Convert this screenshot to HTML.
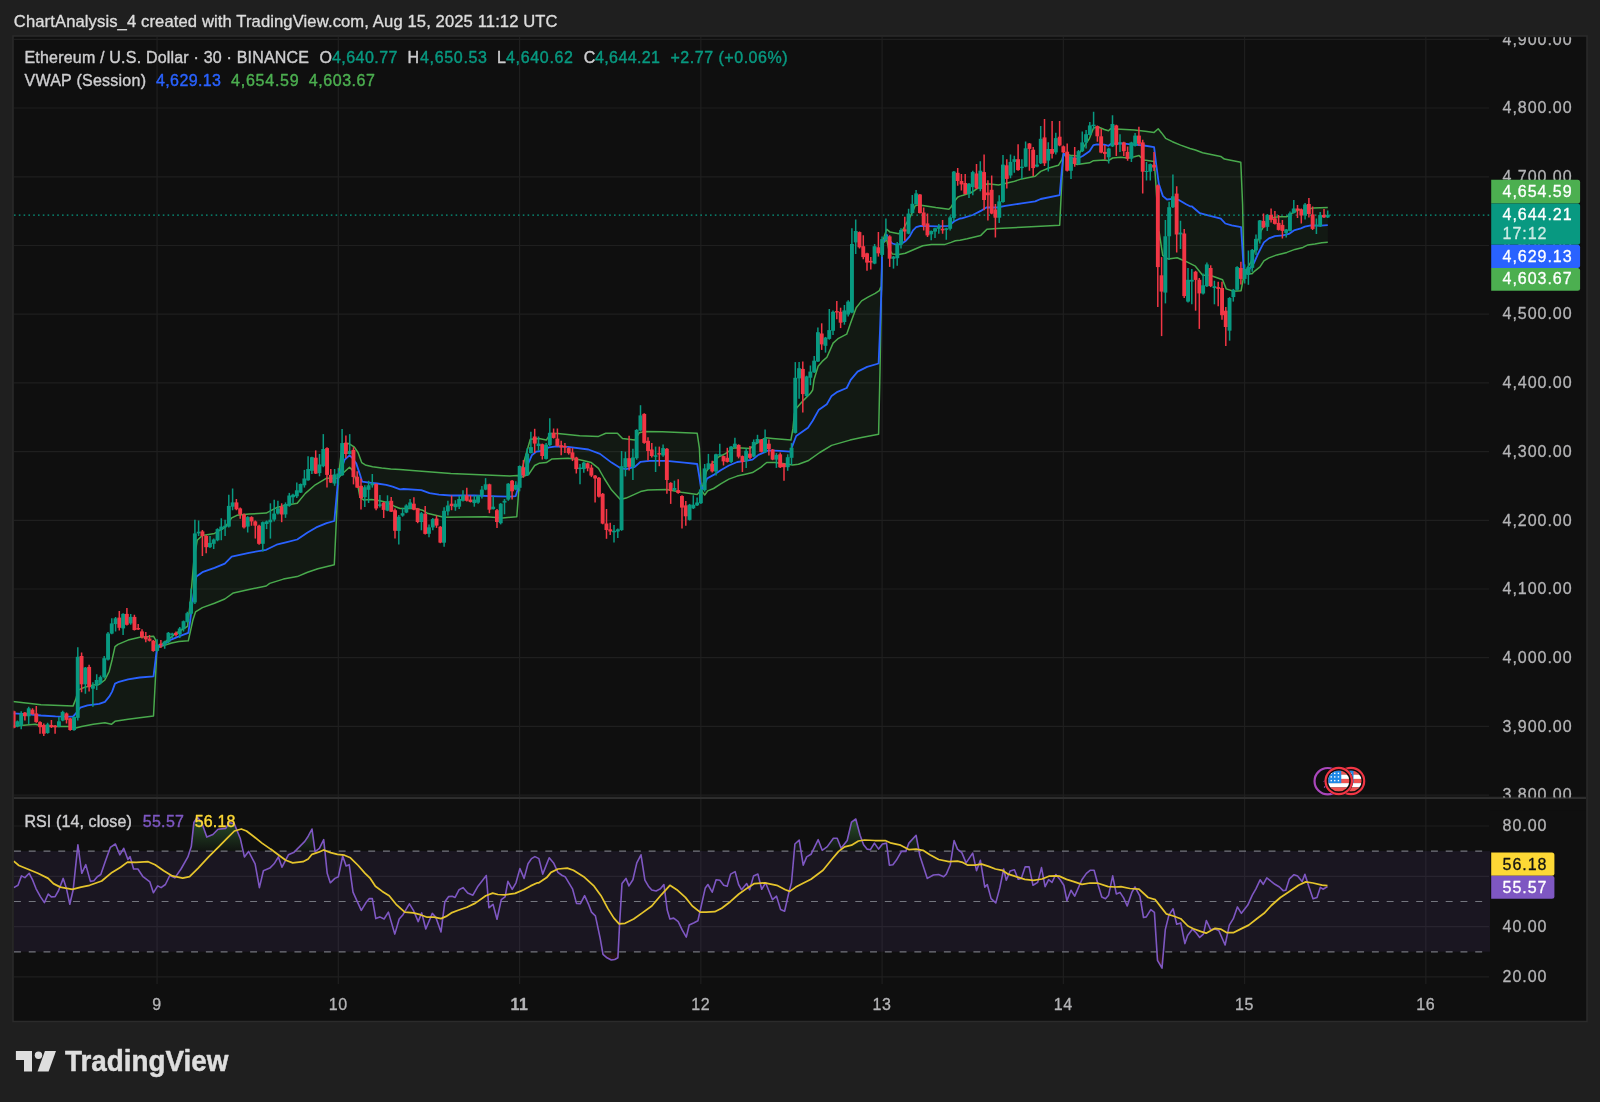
<!DOCTYPE html>
<html><head><meta charset="utf-8"><title>ChartAnalysis_4</title>
<style>
html,body{margin:0;padding:0;background:#1f1f1f;}
body{width:1600px;height:1102px;overflow:hidden;position:relative;font-family:"Liberation Sans",sans-serif;}
svg{position:absolute;left:0;top:0;will-change:transform;}
svg text{font-family:"Liberation Sans",sans-serif;stroke-linejoin:round;}
.b text,text.b{stroke:currentColor;}
</style></head><body>
<svg width="1600" height="1102" viewBox="0 0 1600 1102">
<rect x="0" y="0" width="1600" height="1102" fill="#1f1f1f"/>
<rect x="13" y="36" width="1574" height="985.5" fill="#0f0f0f" stroke="#2b2b2b" stroke-width="1.5"/>
<defs><clipPath id="mainclip"><rect x="13.7" y="37" width="1476.3" height="760"/></clipPath><clipPath id="rsiclip"><rect x="13.7" y="799" width="1476" height="186"/></clipPath></defs>
<line x1="157.05" y1="37" x2="157.05" y2="984" stroke="#1f1f1f" stroke-width="1.2"/>
<line x1="338.31" y1="37" x2="338.31" y2="984" stroke="#1f1f1f" stroke-width="1.2"/>
<line x1="519.57" y1="37" x2="519.57" y2="984" stroke="#1f1f1f" stroke-width="1.2"/>
<line x1="700.83" y1="37" x2="700.83" y2="984" stroke="#1f1f1f" stroke-width="1.2"/>
<line x1="882.09" y1="37" x2="882.09" y2="984" stroke="#1f1f1f" stroke-width="1.2"/>
<line x1="1063.35" y1="37" x2="1063.35" y2="984" stroke="#1f1f1f" stroke-width="1.2"/>
<line x1="1244.61" y1="37" x2="1244.61" y2="984" stroke="#1f1f1f" stroke-width="1.2"/>
<line x1="1425.87" y1="37" x2="1425.87" y2="984" stroke="#1f1f1f" stroke-width="1.2"/>
<line x1="14" y1="39.3" x2="1489" y2="39.3" stroke="#1f1f1f" stroke-width="1.2"/>
<line x1="14" y1="108.0" x2="1489" y2="108.0" stroke="#1f1f1f" stroke-width="1.2"/>
<line x1="14" y1="176.8" x2="1489" y2="176.8" stroke="#1f1f1f" stroke-width="1.2"/>
<line x1="14" y1="245.5" x2="1489" y2="245.5" stroke="#1f1f1f" stroke-width="1.2"/>
<line x1="14" y1="314.2" x2="1489" y2="314.2" stroke="#1f1f1f" stroke-width="1.2"/>
<line x1="14" y1="382.9" x2="1489" y2="382.9" stroke="#1f1f1f" stroke-width="1.2"/>
<line x1="14" y1="451.6" x2="1489" y2="451.6" stroke="#1f1f1f" stroke-width="1.2"/>
<line x1="14" y1="520.3" x2="1489" y2="520.3" stroke="#1f1f1f" stroke-width="1.2"/>
<line x1="14" y1="589.0" x2="1489" y2="589.0" stroke="#1f1f1f" stroke-width="1.2"/>
<line x1="14" y1="657.7" x2="1489" y2="657.7" stroke="#1f1f1f" stroke-width="1.2"/>
<line x1="14" y1="726.4" x2="1489" y2="726.4" stroke="#1f1f1f" stroke-width="1.2"/>
<line x1="14" y1="795.1" x2="1489" y2="795.1" stroke="#1f1f1f" stroke-width="1.2"/>
<line x1="14" y1="826.0" x2="1489" y2="826.0" stroke="#1f1f1f" stroke-width="1.2"/>
<line x1="14" y1="876.3" x2="1489" y2="876.3" stroke="#1f1f1f" stroke-width="1.2"/>
<line x1="14" y1="926.6" x2="1489" y2="926.6" stroke="#1f1f1f" stroke-width="1.2"/>
<line x1="14" y1="976.9" x2="1489" y2="976.9" stroke="#1f1f1f" stroke-width="1.2"/>
<line x1="14" y1="797.5" x2="1586" y2="797.5" stroke="#2b2b2b" stroke-width="1.6"/>
<polygon points="12.0,701.5 41.0,704.7 73.0,706.1 75.9,698.9 78.0,690.1 84.6,687.2 93.3,685.1 99.1,684.3 104.9,680.0 109.2,671.3 112.1,659.7 115.0,646.6 118.0,644.4 128.1,640.1 139.7,637.2 153.5,636.2 155.7,640.1 157.0,647.8 161.9,644.4 177.2,632.5 187.5,626.4 190.3,602.4 193.8,561.0 197.2,540.3 202.4,535.5 214.5,533.4 224.8,527.4 231.7,517.9 236.9,515.3 249.0,514.0 266.2,513.1 276.6,507.6 286.9,505.0 297.2,503.3 305.3,493.4 315.3,484.8 326.2,478.3 338.3,477.9 338.3,478.1 340.8,456.3 342.5,443.8 349.0,443.6 354.4,447.2 358.1,452.7 361.7,462.6 365.3,464.9 372.6,466.7 381.7,468.1 390.7,469.0 400.0,469.5 415.4,470.7 450.8,473.6 486.2,475.1 509.8,476.0 517.4,475.4 519.6,477.2 519.6,477.8 524.5,459.7 530.3,439.3 539.0,438.6 546.3,440.1 550.6,433.5 557.9,433.5 579.7,435.7 598.5,436.4 605.8,433.3 617.4,433.3 622.5,438.6 634.8,440.1 639.2,432.8 645.0,431.4 662.4,431.8 697.2,433.3 699.4,448.1 701.3,490.1 703.0,484.4 706.5,471.4 710.1,465.5 718.3,457.2 725.4,453.7 733.6,448.0 737.2,447.8 750.2,448.4 756.1,443.7 765.5,437.8 772.6,438.4 790.9,440.1 792.9,428.9 794.4,413.6 796.8,407.7 803.2,400.6 810.3,393.5 812.7,390.0 814.0,379.8 818.1,366.2 822.2,361.4 826.9,357.3 833.1,343.1 838.5,338.3 846.7,334.2 850.7,322.7 856.2,307.7 861.6,300.9 868.4,296.8 875.2,293.4 879.3,290.7 880.7,287.3 881.4,290.0 882.1,244.0 884.6,235.3 886.8,229.3 890.1,232.1 898.8,233.7 902.1,231.0 910.8,215.7 915.1,205.9 918.4,204.8 922.8,205.4 935.8,207.6 948.9,209.2 951.1,207.0 954.3,201.6 957.6,197.2 960.0,196.1 963.1,195.2 971.3,192.5 979.5,187.1 987.6,183.7 998.5,185.0 1003.9,183.7 1013.5,181.6 1021.6,178.9 1035.2,176.2 1040.7,171.4 1048.8,168.0 1058.4,165.3 1061.8,159.9 1063.5,153.7 1065.0,153.9 1070.4,155.3 1077.2,156.0 1082.7,148.5 1089.5,138.3 1093.5,128.1 1097.6,126.7 1104.4,129.5 1108.5,130.8 1110.5,128.8 1120.7,129.2 1134.4,130.1 1145.2,131.2 1154.1,132.4 1158.2,128.8 1161.6,132.9 1165.6,138.3 1172.4,141.7 1180.6,145.1 1190.0,148.5 1195.4,150.0 1202.6,152.7 1220.8,156.4 1224.4,159.1 1240.8,162.3 1242.6,204.5 1244.0,275.3 1244.8,273.8 1248.0,266.9 1251.0,261.9 1255.0,248.9 1261.0,230.9 1262.9,227.9 1269.9,217.9 1278.9,216.7 1286.9,216.7 1290.9,213.9 1294.9,211.5 1298.9,209.5 1302.9,210.5 1312.9,208.0 1327.8,207.5 1327.8,242.3 1321.8,242.7 1314.9,243.9 1307.9,244.9 1302.9,247.4 1294.9,249.4 1286.9,252.4 1276.9,254.9 1268.9,257.9 1263.9,260.9 1260.0,266.9 1255.0,270.8 1252.0,273.8 1244.8,273.8 1244.0,275.3 1242.9,280.7 1241.1,290.7 1233.5,291.3 1226.2,288.9 1222.6,279.8 1209.9,275.3 1202.6,275.3 1195.4,266.2 1186.3,261.7 1177.2,257.7 1168.1,259.0 1162.7,255.3 1159.1,231.7 1158.8,239.9 1156.8,198.8 1155.4,177.1 1154.1,161.4 1143.9,160.1 1139.1,155.6 1134.4,156.7 1127.6,158.0 1120.7,157.3 1112.6,158.0 1108.5,160.7 1104.4,160.1 1093.5,160.7 1089.5,162.8 1077.2,164.6 1070.4,162.1 1063.5,153.7 1061.8,181.6 1059.7,225.2 1021.6,227.2 997.1,228.6 986.9,229.3 980.8,235.4 967.2,238.8 960.0,240.2 955.4,240.8 951.1,242.4 944.5,244.6 931.5,244.6 922.8,245.7 914.0,249.5 905.3,253.3 898.8,254.4 892.3,253.9 888.5,248.4 886.8,239.7 882.2,244.0 881.4,290.0 880.0,371.6 878.6,434.2 861.6,437.6 850.0,440.1 831.6,445.4 819.8,452.5 808.0,460.8 798.5,464.3 792.6,464.9 784.4,463.7 774.9,462.5 766.7,462.5 760.8,467.3 752.5,472.6 745.4,474.3 737.2,476.1 728.9,479.1 720.7,483.8 713.6,488.5 707.7,490.9 704.7,495.0 701.3,490.1 697.2,494.5 681.3,492.3 666.7,489.4 647.9,490.1 640.6,491.6 626.1,498.1 620.3,499.6 611.6,490.1 604.3,478.5 598.5,468.4 591.3,462.6 579.7,459.7 568.1,458.2 552.1,458.9 546.3,462.6 539.0,463.3 534.7,465.5 528.9,474.2 519.6,477.8 519.6,477.2 518.0,500.8 516.8,516.7 502.7,517.9 486.2,516.7 462.6,517.1 443.7,517.3 436.6,515.5 427.2,513.2 422.5,510.2 415.4,508.4 401.2,508.4 400.0,508.5 394.4,506.2 387.1,502.6 379.9,500.8 371.7,499.4 363.5,499.9 359.9,497.1 358.1,487.2 355.4,478.1 352.2,469.9 349.5,467.2 342.6,473.5 338.3,478.1 338.3,477.9 334.3,564.8 317.9,568.8 307.6,572.2 297.2,576.6 283.4,579.1 269.7,583.4 266.2,586.0 249.0,589.5 233.4,592.9 224.8,599.0 214.5,603.3 202.4,607.6 195.5,611.9 192.9,620.0 188.3,640.8 178.9,641.5 171.7,643.0 164.4,645.2 157.0,647.8 153.5,716.0 139.7,717.7 128.1,719.2 115.0,721.3 111.4,724.3 104.9,722.8 93.3,724.3 81.7,726.4 75.9,727.9 68.6,726.4 55.5,726.4 41.0,725.7 35.2,724.3 26.5,725.0 12.0,726.4" fill="#4caf50" fill-opacity="0.07" clip-path="url(#mainclip)"/>
<polyline points="12.0,701.5 41.0,704.7 73.0,706.1 75.9,698.9 78.0,690.1 84.6,687.2 93.3,685.1 99.1,684.3 104.9,680.0 109.2,671.3 112.1,659.7 115.0,646.6 118.0,644.4 128.1,640.1 139.7,637.2 153.5,636.2 155.7,640.1 157.0,647.8 161.9,644.4 177.2,632.5 187.5,626.4 190.3,602.4 193.8,561.0 197.2,540.3 202.4,535.5 214.5,533.4 224.8,527.4 231.7,517.9 236.9,515.3 249.0,514.0 266.2,513.1 276.6,507.6 286.9,505.0 297.2,503.3 305.3,493.4 315.3,484.8 326.2,478.3 338.3,477.9 338.3,478.1 340.8,456.3 342.5,443.8 349.0,443.6 354.4,447.2 358.1,452.7 361.7,462.6 365.3,464.9 372.6,466.7 381.7,468.1 390.7,469.0 400.0,469.5 415.4,470.7 450.8,473.6 486.2,475.1 509.8,476.0 517.4,475.4 519.6,477.2 519.6,477.8 524.5,459.7 530.3,439.3 539.0,438.6 546.3,440.1 550.6,433.5 557.9,433.5 579.7,435.7 598.5,436.4 605.8,433.3 617.4,433.3 622.5,438.6 634.8,440.1 639.2,432.8 645.0,431.4 662.4,431.8 697.2,433.3 699.4,448.1 701.3,490.1 703.0,484.4 706.5,471.4 710.1,465.5 718.3,457.2 725.4,453.7 733.6,448.0 737.2,447.8 750.2,448.4 756.1,443.7 765.5,437.8 772.6,438.4 790.9,440.1 792.9,428.9 794.4,413.6 796.8,407.7 803.2,400.6 810.3,393.5 812.7,390.0 814.0,379.8 818.1,366.2 822.2,361.4 826.9,357.3 833.1,343.1 838.5,338.3 846.7,334.2 850.7,322.7 856.2,307.7 861.6,300.9 868.4,296.8 875.2,293.4 879.3,290.7 880.7,287.3 881.4,290.0 882.1,244.0 884.6,235.3 886.8,229.3 890.1,232.1 898.8,233.7 902.1,231.0 910.8,215.7 915.1,205.9 918.4,204.8 922.8,205.4 935.8,207.6 948.9,209.2 951.1,207.0 954.3,201.6 957.6,197.2 960.0,196.1 963.1,195.2 971.3,192.5 979.5,187.1 987.6,183.7 998.5,185.0 1003.9,183.7 1013.5,181.6 1021.6,178.9 1035.2,176.2 1040.7,171.4 1048.8,168.0 1058.4,165.3 1061.8,159.9 1063.5,153.7 1065.0,153.9 1070.4,155.3 1077.2,156.0 1082.7,148.5 1089.5,138.3 1093.5,128.1 1097.6,126.7 1104.4,129.5 1108.5,130.8 1110.5,128.8 1120.7,129.2 1134.4,130.1 1145.2,131.2 1154.1,132.4 1158.2,128.8 1161.6,132.9 1165.6,138.3 1172.4,141.7 1180.6,145.1 1190.0,148.5 1195.4,150.0 1202.6,152.7 1220.8,156.4 1224.4,159.1 1240.8,162.3 1242.6,204.5 1244.0,275.3 1244.8,273.8 1248.0,266.9 1251.0,261.9 1255.0,248.9 1261.0,230.9 1262.9,227.9 1269.9,217.9 1278.9,216.7 1286.9,216.7 1290.9,213.9 1294.9,211.5 1298.9,209.5 1302.9,210.5 1312.9,208.0 1327.8,207.5" fill="none" stroke="#49aa4d" stroke-width="1.5" stroke-linejoin="round" clip-path="url(#mainclip)"/>
<polyline points="12.0,726.4 26.5,725.0 35.2,724.3 41.0,725.7 55.5,726.4 68.6,726.4 75.9,727.9 81.7,726.4 93.3,724.3 104.9,722.8 111.4,724.3 115.0,721.3 128.1,719.2 139.7,717.7 153.5,716.0 157.0,647.8 164.4,645.2 171.7,643.0 178.9,641.5 188.3,640.8 192.9,620.0 195.5,611.9 202.4,607.6 214.5,603.3 224.8,599.0 233.4,592.9 249.0,589.5 266.2,586.0 269.7,583.4 283.4,579.1 297.2,576.6 307.6,572.2 317.9,568.8 334.3,564.8 338.3,477.9 338.3,478.1 342.6,473.5 349.5,467.2 352.2,469.9 355.4,478.1 358.1,487.2 359.9,497.1 363.5,499.9 371.7,499.4 379.9,500.8 387.1,502.6 394.4,506.2 400.0,508.5 401.2,508.4 415.4,508.4 422.5,510.2 427.2,513.2 436.6,515.5 443.7,517.3 462.6,517.1 486.2,516.7 502.7,517.9 516.8,516.7 518.0,500.8 519.6,477.2 519.6,477.8 528.9,474.2 534.7,465.5 539.0,463.3 546.3,462.6 552.1,458.9 568.1,458.2 579.7,459.7 591.3,462.6 598.5,468.4 604.3,478.5 611.6,490.1 620.3,499.6 626.1,498.1 640.6,491.6 647.9,490.1 666.7,489.4 681.3,492.3 697.2,494.5 701.3,490.1 704.7,495.0 707.7,490.9 713.6,488.5 720.7,483.8 728.9,479.1 737.2,476.1 745.4,474.3 752.5,472.6 760.8,467.3 766.7,462.5 774.9,462.5 784.4,463.7 792.6,464.9 798.5,464.3 808.0,460.8 819.8,452.5 831.6,445.4 850.0,440.1 861.6,437.6 878.6,434.2 880.0,371.6 881.4,290.0 882.2,244.0 886.8,239.7 888.5,248.4 892.3,253.9 898.8,254.4 905.3,253.3 914.0,249.5 922.8,245.7 931.5,244.6 944.5,244.6 951.1,242.4 955.4,240.8 960.0,240.2 967.2,238.8 980.8,235.4 986.9,229.3 997.1,228.6 1021.6,227.2 1059.7,225.2 1061.8,181.6 1063.5,153.7 1070.4,162.1 1077.2,164.6 1089.5,162.8 1093.5,160.7 1104.4,160.1 1108.5,160.7 1112.6,158.0 1120.7,157.3 1127.6,158.0 1134.4,156.7 1139.1,155.6 1143.9,160.1 1154.1,161.4 1155.4,177.1 1156.8,198.8 1158.8,239.9 1159.1,231.7 1162.7,255.3 1168.1,259.0 1177.2,257.7 1186.3,261.7 1195.4,266.2 1202.6,275.3 1209.9,275.3 1222.6,279.8 1226.2,288.9 1233.5,291.3 1241.1,290.7 1242.9,280.7 1244.0,275.3 1244.8,273.8 1252.0,273.8 1255.0,270.8 1260.0,266.9 1263.9,260.9 1268.9,257.9 1276.9,254.9 1286.9,252.4 1294.9,249.4 1302.9,247.4 1307.9,244.9 1314.9,243.9 1321.8,242.7 1327.8,242.3" fill="none" stroke="#49aa4d" stroke-width="1.5" stroke-linejoin="round" clip-path="url(#mainclip)"/>
<polyline points="12.0,713.4 26.5,714.1 41.0,715.5 55.5,716.3 73.0,716.7 75.9,713.4 80.2,707.6 87.5,705.4 99.1,703.9 104.9,701.8 109.2,696.7 112.1,691.6 115.0,683.6 118.0,682.2 128.1,679.3 139.7,677.5 153.5,676.4 157.0,647.8 164.4,643.7 171.7,639.3 178.9,636.4 188.3,632.8 190.3,620.0 192.9,599.0 196.4,576.6 202.4,572.2 214.5,567.9 224.8,563.6 231.7,556.7 249.0,552.8 266.2,549.8 276.6,544.7 286.9,542.1 297.2,539.5 307.6,532.6 316.2,527.4 326.6,523.1 334.3,521.0 338.3,477.9 338.3,478.1 344.5,459.9 349.5,455.4 352.2,457.7 356.3,463.6 359.9,474.4 362.2,481.7 369.0,482.6 377.1,483.5 386.2,484.9 392.6,486.7 400.0,489.4 403.6,489.0 421.3,490.2 429.5,493.1 439.0,494.6 450.8,495.5 474.4,495.5 498.0,496.3 509.8,496.7 515.7,496.1 517.4,490.2 519.6,477.2 519.6,477.8 527.4,465.5 531.8,455.3 536.1,451.7 541.9,451.0 549.2,447.3 556.4,446.3 568.1,446.9 588.4,449.5 600.0,453.9 611.6,462.6 620.3,468.1 626.1,469.1 634.8,466.9 640.6,461.8 649.3,460.8 666.7,460.8 684.2,462.6 697.2,464.0 699.4,477.1 701.3,490.1 704.7,484.4 707.1,478.5 713.6,474.9 720.7,470.2 728.9,465.5 737.2,462.0 745.4,460.8 752.5,459.6 758.4,454.9 765.5,451.9 767.9,450.4 779.7,450.8 790.3,451.6 792.6,445.4 796.2,436.0 808.0,427.7 812.7,420.7 818.6,410.1 826.8,404.2 831.6,395.9 837.5,391.8 846.7,388.0 846.7,388.0 850.7,379.8 857.6,371.6 867.1,366.9 878.6,363.5 880.0,330.8 881.4,290.0 882.2,244.0 886.8,234.8 889.0,239.7 892.3,243.5 896.6,244.6 901.0,244.0 905.3,241.3 909.7,236.4 913.0,230.4 916.2,227.2 920.6,225.8 929.3,226.1 938.0,226.4 948.9,225.8 954.3,221.2 960.0,218.5 961.8,218.4 972.7,215.0 980.8,210.9 986.3,207.5 997.1,207.5 1005.3,205.9 1021.6,203.4 1035.2,201.4 1040.7,199.0 1059.7,195.2 1061.8,170.7 1063.5,153.7 1070.4,158.0 1077.2,158.7 1082.7,156.0 1089.5,151.2 1093.5,145.1 1096.9,144.4 1104.4,144.7 1108.5,145.8 1111.2,143.7 1120.7,143.3 1131.6,144.4 1143.9,145.5 1154.1,147.1 1156.1,163.5 1158.8,183.9 1162.9,196.1 1167.0,199.5 1172.4,198.8 1179.3,200.2 1186.1,204.3 1190.0,206.3 1191.7,206.3 1199.9,213.2 1208.1,215.4 1220.8,218.6 1225.3,223.5 1231.7,225.4 1241.1,227.2 1242.6,251.7 1244.0,275.3 1244.8,273.8 1249.0,269.8 1254.0,262.9 1258.0,253.9 1261.0,247.9 1263.9,242.4 1268.9,238.4 1274.9,236.1 1282.9,235.4 1288.9,233.9 1293.9,230.4 1300.9,228.4 1304.9,226.7 1310.9,225.4 1320.8,225.7 1327.8,225.1" fill="none" stroke="#2962ff" stroke-width="1.8" stroke-linejoin="round" clip-path="url(#mainclip)"/>
<line x1="14" y1="215.1" x2="1490" y2="215.1" stroke="#089981" stroke-width="1.2" stroke-dasharray="1.6 3.2"/>
<g stroke-width="1.5" clip-path="url(#mainclip)"><path d="M13.6 710.5V728.6" stroke="#f23645"/><path d="M17.4 720.6V727.2" stroke="#089981"/><path d="M21.2 711.2V729.3" stroke="#089981"/><path d="M24.9 711.9V720.6" stroke="#f23645"/><path d="M28.7 706.8V724.3" stroke="#089981"/><path d="M32.5 708.3V714.8" stroke="#f23645"/><path d="M36.3 706.1V722.8" stroke="#f23645"/><path d="M40.0 721.3V733.7" stroke="#f23645"/><path d="M43.8 723.5V735.9" stroke="#f23645"/><path d="M47.6 722.8V733.7" stroke="#089981"/><path d="M51.4 719.9V727.9" stroke="#f23645"/><path d="M55.1 725.0V733.7" stroke="#f23645"/><path d="M58.9 717.0V727.2" stroke="#089981"/><path d="M62.7 710.8V721.3" stroke="#089981"/><path d="M66.5 712.6V723.5" stroke="#f23645"/><path d="M70.2 717.7V730.8" stroke="#f23645"/><path d="M74.0 716.3V730.8" stroke="#089981"/><path d="M77.8 647.3V720.6" stroke="#089981"/><path d="M81.6 652.4V692.3" stroke="#f23645"/><path d="M85.4 666.9V693.8" stroke="#089981"/><path d="M89.1 664.7V691.6" stroke="#f23645"/><path d="M92.9 682.2V706.8" stroke="#089981"/><path d="M96.7 674.2V690.1" stroke="#089981"/><path d="M100.5 675.6V684.3" stroke="#089981"/><path d="M104.2 656.0V678.5" stroke="#089981"/><path d="M108.0 632.1V660.4" stroke="#089981"/><path d="M111.8 618.3V634.3" stroke="#089981"/><path d="M115.6 616.9V631.4" stroke="#089981"/><path d="M119.3 611.0V630.6" stroke="#f23645"/><path d="M123.1 613.2V635.0" stroke="#089981"/><path d="M126.9 608.1V625.6" stroke="#f23645"/><path d="M130.7 613.9V624.8" stroke="#089981"/><path d="M134.4 614.7V630.6" stroke="#f23645"/><path d="M138.2 624.1V629.9" stroke="#f23645"/><path d="M142.0 629.2V638.6" stroke="#f23645"/><path d="M145.8 632.1V642.2" stroke="#f23645"/><path d="M149.5 635.0V641.5" stroke="#f23645"/><path d="M153.3 640.1V651.7" stroke="#f23645"/><path d="M157.1 639.3V651.7" stroke="#089981"/><path d="M160.9 640.1V648.1" stroke="#f23645"/><path d="M164.7 640.8V648.8" stroke="#089981"/><path d="M168.4 632.1V643.0" stroke="#089981"/><path d="M172.2 632.8V637.9" stroke="#089981"/><path d="M176.0 631.4V636.4" stroke="#f23645"/><path d="M179.8 627.0V637.9" stroke="#089981"/><path d="M183.5 620.5V631.4" stroke="#089981"/><path d="M187.3 611.8V622.7" stroke="#089981"/><path d="M191.1 588.6V614.5" stroke="#089981"/><path d="M194.9 519.7V604.1" stroke="#089981"/><path d="M198.6 520.5V536.0" stroke="#089981"/><path d="M202.4 530.0V555.9" stroke="#f23645"/><path d="M206.2 535.2V553.3" stroke="#f23645"/><path d="M210.0 536.0V548.1" stroke="#089981"/><path d="M213.7 538.6V549.0" stroke="#089981"/><path d="M217.5 528.3V541.2" stroke="#089981"/><path d="M221.3 518.3V540.3" stroke="#089981"/><path d="M225.1 519.7V536.0" stroke="#089981"/><path d="M228.8 494.7V527.4" stroke="#089981"/><path d="M232.6 488.6V510.2" stroke="#089981"/><path d="M236.4 499.0V510.2" stroke="#f23645"/><path d="M240.2 507.6V518.8" stroke="#f23645"/><path d="M244.0 513.6V528.6" stroke="#f23645"/><path d="M247.7 516.2V532.6" stroke="#089981"/><path d="M251.5 516.2V525.7" stroke="#f23645"/><path d="M255.3 520.5V538.6" stroke="#f23645"/><path d="M259.1 524.8V544.7" stroke="#f23645"/><path d="M262.8 521.4V551.6" stroke="#089981"/><path d="M266.6 520.5V529.1" stroke="#089981"/><path d="M270.4 503.3V538.6" stroke="#089981"/><path d="M274.2 499.8V521.4" stroke="#089981"/><path d="M277.9 500.7V514.5" stroke="#089981"/><path d="M281.7 503.3V522.2" stroke="#f23645"/><path d="M285.5 502.4V517.9" stroke="#089981"/><path d="M289.3 492.9V506.7" stroke="#089981"/><path d="M293.0 493.8V503.3" stroke="#089981"/><path d="M296.8 482.6V498.1" stroke="#089981"/><path d="M300.6 483.5V493.0" stroke="#089981"/><path d="M304.4 469.9V487.6" stroke="#089981"/><path d="M308.1 456.3V480.8" stroke="#089981"/><path d="M311.9 456.8V474.0" stroke="#089981"/><path d="M315.7 450.4V474.0" stroke="#f23645"/><path d="M319.5 454.0V476.3" stroke="#089981"/><path d="M323.3 434.1V467.2" stroke="#089981"/><path d="M327.0 447.2V487.6" stroke="#f23645"/><path d="M330.8 469.0V483.1" stroke="#f23645"/><path d="M334.6 469.0V485.8" stroke="#089981"/><path d="M338.4 468.1V484.9" stroke="#089981"/><path d="M342.1 429.1V475.8" stroke="#089981"/><path d="M345.9 435.4V458.1" stroke="#f23645"/><path d="M349.7 434.1V454.5" stroke="#089981"/><path d="M353.5 447.2V484.4" stroke="#f23645"/><path d="M357.2 471.3V488.1" stroke="#f23645"/><path d="M361.0 478.5V509.4" stroke="#f23645"/><path d="M364.8 485.3V507.1" stroke="#089981"/><path d="M368.6 480.8V503.0" stroke="#089981"/><path d="M372.3 474.0V487.6" stroke="#089981"/><path d="M376.1 483.5V510.3" stroke="#f23645"/><path d="M379.9 494.9V507.6" stroke="#089981"/><path d="M383.7 502.1V518.0" stroke="#f23645"/><path d="M387.5 495.3V511.2" stroke="#089981"/><path d="M391.2 497.1V512.1" stroke="#f23645"/><path d="M395.0 508.4V538.5" stroke="#f23645"/><path d="M398.8 514.9V544.4" stroke="#089981"/><path d="M402.6 507.9V516.7" stroke="#089981"/><path d="M406.3 504.3V513.2" stroke="#089981"/><path d="M410.1 499.0V509.0" stroke="#089981"/><path d="M413.9 497.2V510.2" stroke="#f23645"/><path d="M417.7 507.9V523.2" stroke="#f23645"/><path d="M421.4 512.0V530.3" stroke="#089981"/><path d="M425.2 506.1V534.4" stroke="#f23645"/><path d="M429.0 524.4V537.3" stroke="#089981"/><path d="M432.8 517.9V530.3" stroke="#089981"/><path d="M436.5 515.5V527.9" stroke="#f23645"/><path d="M440.3 526.1V543.2" stroke="#f23645"/><path d="M444.1 507.3V546.8" stroke="#089981"/><path d="M447.9 500.8V515.5" stroke="#089981"/><path d="M451.6 495.5V510.2" stroke="#f23645"/><path d="M455.4 500.2V510.8" stroke="#089981"/><path d="M459.2 496.1V509.0" stroke="#089981"/><path d="M463.0 490.2V501.4" stroke="#089981"/><path d="M466.8 487.8V501.4" stroke="#f23645"/><path d="M470.5 495.5V502.5" stroke="#f23645"/><path d="M474.3 495.5V506.7" stroke="#089981"/><path d="M478.1 494.9V503.7" stroke="#089981"/><path d="M481.9 486.0V498.4" stroke="#089981"/><path d="M485.6 478.1V490.2" stroke="#089981"/><path d="M489.4 483.7V513.2" stroke="#f23645"/><path d="M493.2 496.1V509.6" stroke="#089981"/><path d="M497.0 509.0V527.9" stroke="#f23645"/><path d="M500.7 503.1V524.4" stroke="#089981"/><path d="M504.5 499.0V514.3" stroke="#089981"/><path d="M508.3 483.1V500.8" stroke="#089981"/><path d="M512.1 480.1V499.6" stroke="#f23645"/><path d="M515.8 481.3V490.2" stroke="#089981"/><path d="M519.6 465.4V491.3" stroke="#089981"/><path d="M523.4 460.1V477.8" stroke="#f23645"/><path d="M527.2 448.3V476.0" stroke="#089981"/><path d="M530.9 431.8V453.6" stroke="#089981"/><path d="M534.7 428.8V453.0" stroke="#f23645"/><path d="M538.5 436.5V450.6" stroke="#089981"/><path d="M542.3 443.6V459.5" stroke="#f23645"/><path d="M546.1 443.0V459.5" stroke="#089981"/><path d="M549.8 418.3V445.9" stroke="#089981"/><path d="M553.6 428.5V438.6" stroke="#f23645"/><path d="M557.4 428.5V446.6" stroke="#f23645"/><path d="M561.2 440.8V455.3" stroke="#f23645"/><path d="M564.9 443.0V453.1" stroke="#f23645"/><path d="M568.7 447.3V454.6" stroke="#f23645"/><path d="M572.5 448.1V461.1" stroke="#f23645"/><path d="M576.3 456.8V473.5" stroke="#f23645"/><path d="M580.0 464.0V484.3" stroke="#089981"/><path d="M583.8 461.8V472.7" stroke="#089981"/><path d="M587.6 462.6V471.3" stroke="#f23645"/><path d="M591.4 464.7V477.1" stroke="#f23645"/><path d="M595.1 474.9V502.5" stroke="#f23645"/><path d="M598.9 477.1V497.4" stroke="#f23645"/><path d="M602.7 493.0V524.3" stroke="#f23645"/><path d="M606.5 509.0V538.8" stroke="#f23645"/><path d="M610.2 522.8V535.1" stroke="#f23645"/><path d="M614.0 525.0V542.4" stroke="#089981"/><path d="M617.8 528.6V538.0" stroke="#089981"/><path d="M621.6 451.0V530.8" stroke="#089981"/><path d="M625.4 451.7V476.4" stroke="#089981"/><path d="M629.1 435.7V470.6" stroke="#f23645"/><path d="M632.9 448.8V480.0" stroke="#089981"/><path d="M636.7 429.2V459.7" stroke="#089981"/><path d="M640.5 405.2V431.4" stroke="#089981"/><path d="M644.2 413.2V443.7" stroke="#f23645"/><path d="M648.0 437.2V460.4" stroke="#f23645"/><path d="M651.8 443.0V457.5" stroke="#f23645"/><path d="M655.6 446.6V472.0" stroke="#089981"/><path d="M659.3 446.6V466.2" stroke="#f23645"/><path d="M663.1 444.4V456.8" stroke="#089981"/><path d="M666.9 448.1V493.8" stroke="#f23645"/><path d="M670.7 482.2V503.9" stroke="#f23645"/><path d="M674.4 480.7V490.9" stroke="#089981"/><path d="M678.2 479.3V493.8" stroke="#f23645"/><path d="M682.0 495.2V528.6" stroke="#f23645"/><path d="M685.8 501.0V525.7" stroke="#f23645"/><path d="M689.6 503.9V520.6" stroke="#089981"/><path d="M693.3 495.2V509.0" stroke="#089981"/><path d="M697.1 497.4V506.1" stroke="#089981"/><path d="M700.9 484.3V503.9" stroke="#089981"/><path d="M704.7 464.0V491.6" stroke="#089981"/><path d="M708.4 453.9V469.8" stroke="#089981"/><path d="M712.2 460.8V472.6" stroke="#f23645"/><path d="M716.0 453.7V475.5" stroke="#089981"/><path d="M719.8 443.7V456.1" stroke="#089981"/><path d="M723.5 455.5V465.5" stroke="#f23645"/><path d="M727.3 447.8V462.5" stroke="#f23645"/><path d="M731.1 446.0V463.1" stroke="#089981"/><path d="M734.9 437.8V447.8" stroke="#089981"/><path d="M738.6 444.3V458.4" stroke="#f23645"/><path d="M742.4 455.5V472.0" stroke="#f23645"/><path d="M746.2 448.4V467.9" stroke="#089981"/><path d="M750.0 446.0V459.0" stroke="#f23645"/><path d="M753.7 439.5V457.2" stroke="#089981"/><path d="M757.5 434.8V443.7" stroke="#089981"/><path d="M761.3 439.0V452.5" stroke="#f23645"/><path d="M765.1 429.5V453.1" stroke="#089981"/><path d="M768.9 439.5V455.5" stroke="#f23645"/><path d="M772.6 449.0V460.2" stroke="#f23645"/><path d="M776.4 453.1V467.9" stroke="#089981"/><path d="M780.2 452.5V467.9" stroke="#f23645"/><path d="M784.0 463.1V480.8" stroke="#f23645"/><path d="M787.7 454.3V470.8" stroke="#089981"/><path d="M791.5 443.1V464.9" stroke="#089981"/><path d="M795.3 362.1V433.5" stroke="#089981"/><path d="M799.1 362.1V398.8" stroke="#089981"/><path d="M802.8 361.4V412.4" stroke="#f23645"/><path d="M806.6 375.7V396.8" stroke="#089981"/><path d="M810.4 365.5V385.2" stroke="#089981"/><path d="M814.2 356.0V373.0" stroke="#089981"/><path d="M817.9 327.4V362.1" stroke="#089981"/><path d="M821.7 323.3V349.9" stroke="#f23645"/><path d="M825.5 336.9V352.6" stroke="#089981"/><path d="M829.3 309.0V339.7" stroke="#089981"/><path d="M833.0 310.4V334.9" stroke="#089981"/><path d="M836.8 300.9V319.3" stroke="#f23645"/><path d="M840.6 307.7V328.1" stroke="#f23645"/><path d="M844.4 305.0V324.7" stroke="#089981"/><path d="M848.2 300.2V316.5" stroke="#089981"/><path d="M851.9 228.3V313.2" stroke="#089981"/><path d="M855.7 219.5V253.9" stroke="#089981"/><path d="M859.5 231.5V248.4" stroke="#f23645"/><path d="M863.3 235.3V259.3" stroke="#f23645"/><path d="M867.0 252.8V270.7" stroke="#f23645"/><path d="M870.8 257.1V269.6" stroke="#f23645"/><path d="M874.6 244.0V264.2" stroke="#089981"/><path d="M878.4 232.1V256.6" stroke="#f23645"/><path d="M882.1 236.4V257.1" stroke="#089981"/><path d="M885.9 218.5V240.2" stroke="#089981"/><path d="M889.7 235.3V266.9" stroke="#f23645"/><path d="M893.5 256.0V268.6" stroke="#089981"/><path d="M897.2 241.9V265.8" stroke="#089981"/><path d="M901.0 228.3V248.4" stroke="#089981"/><path d="M904.8 216.8V240.8" stroke="#f23645"/><path d="M908.6 208.7V234.2" stroke="#089981"/><path d="M912.3 195.0V213.6" stroke="#089981"/><path d="M916.1 190.1V204.8" stroke="#089981"/><path d="M919.9 194.0V213.6" stroke="#f23645"/><path d="M923.7 207.6V230.4" stroke="#f23645"/><path d="M927.5 213.6V237.0" stroke="#f23645"/><path d="M931.2 230.4V240.2" stroke="#089981"/><path d="M935.0 227.7V238.1" stroke="#089981"/><path d="M938.8 223.9V233.7" stroke="#089981"/><path d="M942.6 220.1V233.7" stroke="#f23645"/><path d="M946.3 227.7V239.7" stroke="#089981"/><path d="M950.1 215.7V230.4" stroke="#089981"/><path d="M953.9 171.1V221.2" stroke="#089981"/><path d="M957.7 168.0V185.7" stroke="#f23645"/><path d="M961.4 174.1V190.5" stroke="#f23645"/><path d="M965.2 174.1V194.6" stroke="#f23645"/><path d="M969.0 183.0V198.0" stroke="#089981"/><path d="M972.8 170.7V195.2" stroke="#089981"/><path d="M976.5 163.9V189.1" stroke="#f23645"/><path d="M980.3 161.2V191.2" stroke="#089981"/><path d="M984.1 154.4V210.2" stroke="#f23645"/><path d="M987.9 180.3V220.4" stroke="#f23645"/><path d="M991.7 175.5V214.3" stroke="#f23645"/><path d="M995.4 204.1V237.4" stroke="#f23645"/><path d="M999.2 195.2V223.1" stroke="#089981"/><path d="M1003.0 155.1V202.7" stroke="#089981"/><path d="M1006.8 159.2V188.4" stroke="#f23645"/><path d="M1010.5 154.4V178.2" stroke="#089981"/><path d="M1014.3 155.8V172.8" stroke="#089981"/><path d="M1018.1 144.2V170.7" stroke="#f23645"/><path d="M1021.9 159.2V178.9" stroke="#089981"/><path d="M1025.6 141.5V167.3" stroke="#089981"/><path d="M1029.4 142.9V170.7" stroke="#f23645"/><path d="M1033.2 146.9V176.2" stroke="#f23645"/><path d="M1037.0 155.1V167.3" stroke="#089981"/><path d="M1040.7 125.9V163.9" stroke="#089981"/><path d="M1044.5 119.0V166.0" stroke="#f23645"/><path d="M1048.3 142.2V171.4" stroke="#089981"/><path d="M1052.1 121.1V158.5" stroke="#f23645"/><path d="M1055.8 132.7V154.4" stroke="#089981"/><path d="M1059.6 121.1V146.3" stroke="#f23645"/><path d="M1063.4 145.6V153.1" stroke="#f23645"/><path d="M1067.2 143.5V171.4" stroke="#f23645"/><path d="M1071.0 155.8V178.9" stroke="#089981"/><path d="M1074.7 146.9V166.7" stroke="#f23645"/><path d="M1078.5 149.9V164.8" stroke="#089981"/><path d="M1082.3 131.5V151.9" stroke="#089981"/><path d="M1086.1 130.1V148.5" stroke="#089981"/><path d="M1089.8 122.0V135.6" stroke="#089981"/><path d="M1093.6 111.8V129.5" stroke="#089981"/><path d="M1097.4 125.4V141.7" stroke="#f23645"/><path d="M1101.2 128.8V153.3" stroke="#f23645"/><path d="M1104.9 145.1V159.4" stroke="#f23645"/><path d="M1108.7 147.8V163.5" stroke="#089981"/><path d="M1112.5 115.2V147.1" stroke="#089981"/><path d="M1116.3 124.7V156.0" stroke="#f23645"/><path d="M1120.0 134.2V151.9" stroke="#089981"/><path d="M1123.8 141.7V156.0" stroke="#f23645"/><path d="M1127.6 146.5V160.7" stroke="#f23645"/><path d="M1131.4 141.7V162.1" stroke="#089981"/><path d="M1135.1 132.9V146.5" stroke="#089981"/><path d="M1138.9 126.7V145.8" stroke="#f23645"/><path d="M1142.7 139.7V193.4" stroke="#f23645"/><path d="M1146.5 162.1V180.5" stroke="#089981"/><path d="M1150.3 163.5V180.5" stroke="#089981"/><path d="M1154.0 151.9V171.0" stroke="#f23645"/><path d="M1157.8 184.5V307.1" stroke="#f23645"/><path d="M1161.6 257.1V336.1" stroke="#f23645"/><path d="M1165.4 219.9V303.4" stroke="#089981"/><path d="M1169.1 201.8V259.9" stroke="#089981"/><path d="M1172.9 174.5V208.1" stroke="#089981"/><path d="M1176.7 186.3V252.6" stroke="#f23645"/><path d="M1180.5 220.8V249.0" stroke="#089981"/><path d="M1184.2 229.0V298.0" stroke="#f23645"/><path d="M1188.0 268.0V302.5" stroke="#089981"/><path d="M1191.8 268.9V304.3" stroke="#089981"/><path d="M1195.6 270.8V310.7" stroke="#f23645"/><path d="M1199.3 278.0V328.9" stroke="#f23645"/><path d="M1203.1 273.5V294.4" stroke="#089981"/><path d="M1206.9 262.6V287.1" stroke="#089981"/><path d="M1210.7 265.3V287.1" stroke="#f23645"/><path d="M1214.4 280.7V304.3" stroke="#089981"/><path d="M1218.2 281.7V306.2" stroke="#f23645"/><path d="M1222.0 281.7V319.8" stroke="#f23645"/><path d="M1225.8 307.1V346.1" stroke="#f23645"/><path d="M1229.6 297.1V340.7" stroke="#089981"/><path d="M1233.3 288.9V301.6" stroke="#089981"/><path d="M1237.1 266.2V290.7" stroke="#089981"/><path d="M1240.9 261.7V284.4" stroke="#f23645"/><path d="M1244.7 264.4V283.5" stroke="#089981"/><path d="M1248.4 250.4V284.8" stroke="#089981"/><path d="M1252.2 248.9V271.8" stroke="#089981"/><path d="M1256.0 234.4V254.9" stroke="#089981"/><path d="M1259.8 219.9V243.4" stroke="#089981"/><path d="M1263.5 213.4V227.9" stroke="#f23645"/><path d="M1267.3 213.9V230.9" stroke="#089981"/><path d="M1271.1 208.5V222.4" stroke="#f23645"/><path d="M1274.9 211.0V224.4" stroke="#f23645"/><path d="M1278.6 214.9V230.4" stroke="#f23645"/><path d="M1282.4 219.9V238.4" stroke="#f23645"/><path d="M1286.2 228.9V237.4" stroke="#089981"/><path d="M1290.0 211.5V231.4" stroke="#089981"/><path d="M1293.8 200.0V213.4" stroke="#089981"/><path d="M1297.5 205.0V217.9" stroke="#f23645"/><path d="M1301.3 208.5V223.4" stroke="#f23645"/><path d="M1305.1 203.0V219.4" stroke="#089981"/><path d="M1308.9 198.0V217.4" stroke="#f23645"/><path d="M1312.6 206.5V229.9" stroke="#f23645"/><path d="M1316.4 218.4V233.9" stroke="#089981"/><path d="M1320.2 212.0V226.9" stroke="#089981"/><path d="M1324.0 209.0V217.9" stroke="#f23645"/><path d="M1327.7 210.5V217.9" stroke="#089981"/></g>
<g clip-path="url(#mainclip)"><rect x="11.7" y="711.2" width="3.9" height="16.7" fill="#f23645"/><rect x="15.4" y="721.3" width="3.9" height="5.1" fill="#089981"/><rect x="19.2" y="713.4" width="3.9" height="12.3" fill="#089981"/><rect x="23.0" y="712.6" width="3.9" height="3.6" fill="#f23645"/><rect x="26.8" y="708.3" width="3.9" height="8.0" fill="#089981"/><rect x="30.5" y="709.7" width="3.9" height="4.4" fill="#f23645"/><rect x="34.3" y="713.4" width="3.9" height="8.7" fill="#f23645"/><rect x="38.1" y="722.1" width="3.9" height="5.1" fill="#f23645"/><rect x="41.9" y="725.0" width="3.9" height="8.7" fill="#f23645"/><rect x="45.6" y="724.3" width="3.9" height="8.7" fill="#089981"/><rect x="49.4" y="725.0" width="3.9" height="2.2" fill="#f23645"/><rect x="53.2" y="725.7" width="3.9" height="1.5" fill="#f23645"/><rect x="57.0" y="721.3" width="3.9" height="5.1" fill="#089981"/><rect x="60.7" y="711.9" width="3.9" height="8.7" fill="#089981"/><rect x="64.5" y="713.4" width="3.9" height="6.5" fill="#f23645"/><rect x="68.3" y="718.4" width="3.9" height="11.6" fill="#f23645"/><rect x="72.1" y="717.0" width="3.9" height="13.1" fill="#089981"/><rect x="75.8" y="656.8" width="3.9" height="61.0" fill="#089981"/><rect x="79.6" y="656.0" width="3.9" height="28.3" fill="#f23645"/><rect x="83.4" y="667.6" width="3.9" height="16.7" fill="#089981"/><rect x="87.2" y="666.9" width="3.9" height="20.3" fill="#f23645"/><rect x="91.0" y="685.8" width="3.9" height="2.9" fill="#089981"/><rect x="94.7" y="680.0" width="3.9" height="5.8" fill="#089981"/><rect x="98.5" y="677.1" width="3.9" height="5.8" fill="#089981"/><rect x="102.3" y="658.2" width="3.9" height="18.9" fill="#089981"/><rect x="106.1" y="633.5" width="3.9" height="26.1" fill="#089981"/><rect x="109.8" y="623.4" width="3.9" height="10.2" fill="#089981"/><rect x="113.6" y="618.3" width="3.9" height="5.8" fill="#089981"/><rect x="117.4" y="617.6" width="3.9" height="10.2" fill="#f23645"/><rect x="121.2" y="613.9" width="3.9" height="14.5" fill="#089981"/><rect x="124.9" y="613.9" width="3.9" height="10.9" fill="#f23645"/><rect x="128.7" y="616.9" width="3.9" height="6.5" fill="#089981"/><rect x="132.5" y="616.9" width="3.9" height="13.1" fill="#f23645"/><rect x="136.3" y="628.0" width="3.9" height="1.5" fill="#f23645"/><rect x="140.0" y="631.4" width="3.9" height="5.8" fill="#f23645"/><rect x="143.8" y="636.4" width="3.9" height="2.9" fill="#f23645"/><rect x="147.6" y="638.6" width="3.9" height="2.2" fill="#f23645"/><rect x="151.4" y="640.8" width="3.9" height="10.2" fill="#f23645"/><rect x="155.2" y="644.4" width="3.9" height="6.5" fill="#089981"/><rect x="158.9" y="643.7" width="3.9" height="1.5" fill="#f23645"/><rect x="162.7" y="641.5" width="3.9" height="3.6" fill="#089981"/><rect x="166.5" y="632.8" width="3.9" height="9.4" fill="#089981"/><rect x="170.3" y="633.5" width="3.9" height="1.5" fill="#089981"/><rect x="174.0" y="632.8" width="3.9" height="2.2" fill="#f23645"/><rect x="177.8" y="628.5" width="3.9" height="5.8" fill="#089981"/><rect x="181.6" y="621.2" width="3.9" height="8.0" fill="#089981"/><rect x="185.4" y="613.2" width="3.9" height="8.7" fill="#089981"/><rect x="189.1" y="601.6" width="3.9" height="12.1" fill="#089981"/><rect x="192.9" y="533.4" width="3.9" height="69.0" fill="#089981"/><rect x="196.7" y="531.7" width="3.9" height="1.7" fill="#089981"/><rect x="200.5" y="531.4" width="3.9" height="4.7" fill="#f23645"/><rect x="204.2" y="536.0" width="3.9" height="11.2" fill="#f23645"/><rect x="208.0" y="542.9" width="3.9" height="4.3" fill="#089981"/><rect x="211.8" y="539.5" width="3.9" height="4.3" fill="#089981"/><rect x="215.6" y="529.1" width="3.9" height="11.2" fill="#089981"/><rect x="219.3" y="526.6" width="3.9" height="3.4" fill="#089981"/><rect x="223.1" y="525.7" width="3.9" height="1.7" fill="#089981"/><rect x="226.9" y="505.9" width="3.9" height="20.7" fill="#089981"/><rect x="230.7" y="502.4" width="3.9" height="4.3" fill="#089981"/><rect x="234.5" y="502.4" width="3.9" height="6.9" fill="#f23645"/><rect x="238.2" y="508.4" width="3.9" height="6.0" fill="#f23645"/><rect x="242.0" y="514.5" width="3.9" height="12.9" fill="#f23645"/><rect x="245.8" y="517.1" width="3.9" height="9.5" fill="#089981"/><rect x="249.6" y="517.1" width="3.9" height="4.3" fill="#f23645"/><rect x="253.3" y="521.4" width="3.9" height="4.3" fill="#f23645"/><rect x="257.1" y="525.7" width="3.9" height="18.1" fill="#f23645"/><rect x="260.9" y="522.2" width="3.9" height="21.6" fill="#089981"/><rect x="264.7" y="521.4" width="3.9" height="2.6" fill="#089981"/><rect x="268.4" y="519.7" width="3.9" height="2.6" fill="#089981"/><rect x="272.2" y="513.6" width="3.9" height="6.0" fill="#089981"/><rect x="276.0" y="508.4" width="3.9" height="5.2" fill="#089981"/><rect x="279.8" y="506.7" width="3.9" height="7.8" fill="#f23645"/><rect x="283.5" y="504.1" width="3.9" height="10.3" fill="#089981"/><rect x="287.3" y="495.5" width="3.9" height="10.3" fill="#089981"/><rect x="291.1" y="494.7" width="3.9" height="2.6" fill="#089981"/><rect x="294.9" y="490.3" width="3.9" height="6.0" fill="#089981"/><rect x="298.6" y="484.0" width="3.9" height="8.6" fill="#089981"/><rect x="302.4" y="478.5" width="3.9" height="6.8" fill="#089981"/><rect x="306.2" y="469.0" width="3.9" height="11.3" fill="#089981"/><rect x="310.0" y="457.2" width="3.9" height="13.6" fill="#089981"/><rect x="313.8" y="457.7" width="3.9" height="15.9" fill="#f23645"/><rect x="317.5" y="464.5" width="3.9" height="8.6" fill="#089981"/><rect x="321.3" y="449.0" width="3.9" height="17.2" fill="#089981"/><rect x="325.1" y="448.1" width="3.9" height="26.8" fill="#f23645"/><rect x="328.9" y="474.9" width="3.9" height="7.7" fill="#f23645"/><rect x="332.6" y="474.4" width="3.9" height="9.1" fill="#089981"/><rect x="336.4" y="473.5" width="3.9" height="3.6" fill="#089981"/><rect x="340.2" y="443.1" width="3.9" height="32.2" fill="#089981"/><rect x="344.0" y="442.7" width="3.9" height="11.3" fill="#f23645"/><rect x="347.7" y="450.9" width="3.9" height="3.2" fill="#089981"/><rect x="351.5" y="449.9" width="3.9" height="27.2" fill="#f23645"/><rect x="355.3" y="476.7" width="3.9" height="10.9" fill="#f23645"/><rect x="359.1" y="485.8" width="3.9" height="12.3" fill="#f23645"/><rect x="362.8" y="487.2" width="3.9" height="10.0" fill="#089981"/><rect x="366.6" y="485.3" width="3.9" height="4.5" fill="#089981"/><rect x="370.4" y="483.5" width="3.9" height="1.8" fill="#089981"/><rect x="374.2" y="484.0" width="3.9" height="24.5" fill="#f23645"/><rect x="377.9" y="504.4" width="3.9" height="1.4" fill="#089981"/><rect x="381.7" y="502.6" width="3.9" height="7.3" fill="#f23645"/><rect x="385.5" y="501.2" width="3.9" height="9.5" fill="#089981"/><rect x="389.3" y="500.8" width="3.9" height="10.9" fill="#f23645"/><rect x="393.1" y="510.2" width="3.9" height="20.6" fill="#f23645"/><rect x="396.8" y="516.7" width="3.9" height="14.2" fill="#089981"/><rect x="400.6" y="513.2" width="3.9" height="2.4" fill="#089981"/><rect x="404.4" y="505.5" width="3.9" height="7.1" fill="#089981"/><rect x="408.2" y="502.5" width="3.9" height="5.9" fill="#089981"/><rect x="411.9" y="503.7" width="3.9" height="5.9" fill="#f23645"/><rect x="415.7" y="508.4" width="3.9" height="13.6" fill="#f23645"/><rect x="419.5" y="513.2" width="3.9" height="8.8" fill="#089981"/><rect x="423.3" y="513.8" width="3.9" height="20.1" fill="#f23645"/><rect x="427.0" y="527.3" width="3.9" height="6.5" fill="#089981"/><rect x="430.8" y="519.1" width="3.9" height="8.3" fill="#089981"/><rect x="434.6" y="518.5" width="3.9" height="7.1" fill="#f23645"/><rect x="438.4" y="526.7" width="3.9" height="15.9" fill="#f23645"/><rect x="442.1" y="510.8" width="3.9" height="31.9" fill="#089981"/><rect x="445.9" y="505.5" width="3.9" height="5.9" fill="#089981"/><rect x="449.7" y="503.7" width="3.9" height="2.4" fill="#f23645"/><rect x="453.5" y="503.7" width="3.9" height="3.5" fill="#089981"/><rect x="457.2" y="499.0" width="3.9" height="7.7" fill="#089981"/><rect x="461.0" y="495.5" width="3.9" height="5.3" fill="#089981"/><rect x="464.8" y="495.5" width="3.9" height="5.3" fill="#f23645"/><rect x="468.6" y="499.6" width="3.9" height="2.4" fill="#f23645"/><rect x="472.4" y="499.6" width="3.9" height="3.5" fill="#089981"/><rect x="476.1" y="495.5" width="3.9" height="7.1" fill="#089981"/><rect x="479.9" y="489.6" width="3.9" height="5.9" fill="#089981"/><rect x="483.7" y="484.3" width="3.9" height="5.3" fill="#089981"/><rect x="487.5" y="484.3" width="3.9" height="25.4" fill="#f23645"/><rect x="491.2" y="506.7" width="3.9" height="2.4" fill="#089981"/><rect x="495.0" y="510.2" width="3.9" height="11.8" fill="#f23645"/><rect x="498.8" y="503.7" width="3.9" height="19.5" fill="#089981"/><rect x="502.6" y="500.8" width="3.9" height="1.8" fill="#089981"/><rect x="506.3" y="483.7" width="3.9" height="15.9" fill="#089981"/><rect x="510.1" y="480.7" width="3.9" height="10.6" fill="#f23645"/><rect x="513.9" y="484.9" width="3.9" height="4.7" fill="#089981"/><rect x="517.7" y="466.0" width="3.9" height="21.8" fill="#089981"/><rect x="521.4" y="467.2" width="3.9" height="8.3" fill="#f23645"/><rect x="525.2" y="453.6" width="3.9" height="21.8" fill="#089981"/><rect x="529.0" y="447.1" width="3.9" height="5.9" fill="#089981"/><rect x="532.8" y="436.5" width="3.9" height="7.1" fill="#f23645"/><rect x="536.6" y="443.6" width="3.9" height="2.4" fill="#089981"/><rect x="540.3" y="444.2" width="3.9" height="11.8" fill="#f23645"/><rect x="544.1" y="444.7" width="3.9" height="14.2" fill="#089981"/><rect x="547.9" y="432.8" width="3.9" height="12.3" fill="#089981"/><rect x="551.7" y="432.8" width="3.9" height="5.1" fill="#f23645"/><rect x="555.4" y="438.6" width="3.9" height="7.3" fill="#f23645"/><rect x="559.2" y="445.2" width="3.9" height="2.2" fill="#f23645"/><rect x="563.0" y="445.9" width="3.9" height="1.5" fill="#f23645"/><rect x="566.8" y="448.1" width="3.9" height="5.1" fill="#f23645"/><rect x="570.5" y="452.4" width="3.9" height="5.8" fill="#f23645"/><rect x="574.3" y="457.5" width="3.9" height="11.6" fill="#f23645"/><rect x="578.1" y="467.6" width="3.9" height="1.5" fill="#089981"/><rect x="581.9" y="462.6" width="3.9" height="6.5" fill="#089981"/><rect x="585.6" y="463.3" width="3.9" height="5.1" fill="#f23645"/><rect x="589.4" y="467.6" width="3.9" height="8.0" fill="#f23645"/><rect x="593.2" y="475.6" width="3.9" height="2.9" fill="#f23645"/><rect x="597.0" y="477.8" width="3.9" height="18.9" fill="#f23645"/><rect x="600.7" y="493.8" width="3.9" height="29.8" fill="#f23645"/><rect x="604.5" y="523.5" width="3.9" height="6.5" fill="#f23645"/><rect x="608.3" y="529.3" width="3.9" height="2.2" fill="#f23645"/><rect x="612.1" y="530.8" width="3.9" height="1.5" fill="#089981"/><rect x="615.9" y="529.3" width="3.9" height="2.2" fill="#089981"/><rect x="619.6" y="466.2" width="3.9" height="63.9" fill="#089981"/><rect x="623.4" y="458.2" width="3.9" height="9.4" fill="#089981"/><rect x="627.2" y="458.2" width="3.9" height="8.7" fill="#f23645"/><rect x="631.0" y="457.5" width="3.9" height="9.4" fill="#089981"/><rect x="634.7" y="429.9" width="3.9" height="28.3" fill="#089981"/><rect x="638.5" y="415.4" width="3.9" height="15.2" fill="#089981"/><rect x="642.3" y="413.9" width="3.9" height="29.0" fill="#f23645"/><rect x="646.1" y="440.8" width="3.9" height="10.2" fill="#f23645"/><rect x="649.8" y="449.5" width="3.9" height="6.5" fill="#f23645"/><rect x="653.6" y="455.3" width="3.9" height="1.5" fill="#089981"/><rect x="657.4" y="453.1" width="3.9" height="1.5" fill="#f23645"/><rect x="661.2" y="448.1" width="3.9" height="7.3" fill="#089981"/><rect x="664.9" y="448.8" width="3.9" height="31.2" fill="#f23645"/><rect x="668.7" y="482.9" width="3.9" height="8.0" fill="#f23645"/><rect x="672.5" y="488.0" width="3.9" height="2.2" fill="#089981"/><rect x="676.3" y="490.1" width="3.9" height="2.9" fill="#f23645"/><rect x="680.0" y="496.0" width="3.9" height="11.6" fill="#f23645"/><rect x="683.8" y="505.4" width="3.9" height="10.9" fill="#f23645"/><rect x="687.6" y="504.7" width="3.9" height="15.2" fill="#089981"/><rect x="691.4" y="504.7" width="3.9" height="3.6" fill="#089981"/><rect x="695.2" y="502.5" width="3.9" height="2.9" fill="#089981"/><rect x="698.9" y="489.4" width="3.9" height="13.8" fill="#089981"/><rect x="702.7" y="468.4" width="3.9" height="21.8" fill="#089981"/><rect x="706.5" y="463.3" width="3.9" height="5.8" fill="#089981"/><rect x="710.3" y="463.7" width="3.9" height="7.7" fill="#f23645"/><rect x="714.0" y="454.3" width="3.9" height="17.1" fill="#089981"/><rect x="717.8" y="454.3" width="3.9" height="1.2" fill="#089981"/><rect x="721.6" y="456.1" width="3.9" height="5.3" fill="#f23645"/><rect x="725.4" y="457.8" width="3.9" height="4.1" fill="#f23645"/><rect x="729.1" y="446.6" width="3.9" height="15.3" fill="#089981"/><rect x="732.9" y="443.7" width="3.9" height="3.5" fill="#089981"/><rect x="736.7" y="444.9" width="3.9" height="11.8" fill="#f23645"/><rect x="740.5" y="456.1" width="3.9" height="5.9" fill="#f23645"/><rect x="744.2" y="450.8" width="3.9" height="10.0" fill="#089981"/><rect x="748.0" y="453.7" width="3.9" height="4.1" fill="#f23645"/><rect x="751.8" y="441.9" width="3.9" height="14.7" fill="#089981"/><rect x="755.6" y="439.0" width="3.9" height="4.1" fill="#089981"/><rect x="759.3" y="439.5" width="3.9" height="12.4" fill="#f23645"/><rect x="763.1" y="438.4" width="3.9" height="13.6" fill="#089981"/><rect x="766.9" y="443.7" width="3.9" height="5.3" fill="#f23645"/><rect x="770.7" y="449.6" width="3.9" height="10.0" fill="#f23645"/><rect x="774.5" y="454.9" width="3.9" height="4.7" fill="#089981"/><rect x="778.2" y="454.3" width="3.9" height="13.0" fill="#f23645"/><rect x="782.0" y="463.7" width="3.9" height="3.5" fill="#f23645"/><rect x="785.8" y="457.2" width="3.9" height="10.0" fill="#089981"/><rect x="789.6" y="447.8" width="3.9" height="10.0" fill="#089981"/><rect x="793.3" y="377.8" width="3.9" height="55.1" fill="#089981"/><rect x="797.1" y="368.2" width="3.9" height="10.2" fill="#089981"/><rect x="800.9" y="368.9" width="3.9" height="25.2" fill="#f23645"/><rect x="804.7" y="376.4" width="3.9" height="19.7" fill="#089981"/><rect x="808.4" y="371.6" width="3.9" height="6.1" fill="#089981"/><rect x="812.2" y="360.7" width="3.9" height="11.6" fill="#089981"/><rect x="816.0" y="332.2" width="3.9" height="29.3" fill="#089981"/><rect x="819.8" y="333.5" width="3.9" height="10.9" fill="#f23645"/><rect x="823.5" y="337.6" width="3.9" height="8.2" fill="#089981"/><rect x="827.3" y="330.1" width="3.9" height="8.8" fill="#089981"/><rect x="831.1" y="311.8" width="3.9" height="19.0" fill="#089981"/><rect x="834.9" y="311.1" width="3.9" height="1.4" fill="#f23645"/><rect x="838.7" y="311.8" width="3.9" height="10.9" fill="#f23645"/><rect x="842.4" y="310.4" width="3.9" height="11.6" fill="#089981"/><rect x="846.2" y="301.6" width="3.9" height="12.9" fill="#089981"/><rect x="850.0" y="244.0" width="3.9" height="68.6" fill="#089981"/><rect x="853.8" y="231.0" width="3.9" height="11.4" fill="#089981"/><rect x="857.5" y="232.1" width="3.9" height="15.2" fill="#f23645"/><rect x="861.3" y="246.2" width="3.9" height="10.9" fill="#f23645"/><rect x="865.1" y="253.3" width="3.9" height="9.3" fill="#f23645"/><rect x="868.9" y="260.9" width="3.9" height="1.6" fill="#f23645"/><rect x="872.6" y="246.2" width="3.9" height="17.4" fill="#089981"/><rect x="876.4" y="247.3" width="3.9" height="6.0" fill="#f23645"/><rect x="880.2" y="239.1" width="3.9" height="15.8" fill="#089981"/><rect x="884.0" y="235.9" width="3.9" height="3.8" fill="#089981"/><rect x="887.7" y="236.4" width="3.9" height="22.3" fill="#f23645"/><rect x="891.5" y="256.6" width="3.9" height="2.2" fill="#089981"/><rect x="895.3" y="244.0" width="3.9" height="14.2" fill="#089981"/><rect x="899.1" y="229.9" width="3.9" height="14.7" fill="#089981"/><rect x="902.8" y="229.3" width="3.9" height="2.2" fill="#f23645"/><rect x="906.6" y="213.6" width="3.9" height="20.1" fill="#089981"/><rect x="910.4" y="203.8" width="3.9" height="9.3" fill="#089981"/><rect x="914.2" y="193.4" width="3.9" height="10.9" fill="#089981"/><rect x="918.0" y="194.5" width="3.9" height="18.5" fill="#f23645"/><rect x="921.7" y="212.5" width="3.9" height="13.1" fill="#f23645"/><rect x="925.5" y="223.4" width="3.9" height="12.0" fill="#f23645"/><rect x="929.3" y="231.0" width="3.9" height="3.3" fill="#089981"/><rect x="933.1" y="228.3" width="3.9" height="3.3" fill="#089981"/><rect x="936.8" y="226.6" width="3.9" height="2.2" fill="#089981"/><rect x="940.6" y="228.8" width="3.9" height="1.6" fill="#f23645"/><rect x="944.4" y="228.3" width="3.9" height="1.6" fill="#089981"/><rect x="948.2" y="217.4" width="3.9" height="11.4" fill="#089981"/><rect x="951.9" y="171.6" width="3.9" height="46.3" fill="#089981"/><rect x="955.7" y="172.8" width="3.9" height="8.2" fill="#f23645"/><rect x="959.5" y="181.0" width="3.9" height="3.4" fill="#f23645"/><rect x="963.3" y="183.0" width="3.9" height="10.9" fill="#f23645"/><rect x="967.0" y="183.7" width="3.9" height="10.2" fill="#089981"/><rect x="970.8" y="172.1" width="3.9" height="15.0" fill="#089981"/><rect x="974.6" y="173.5" width="3.9" height="15.0" fill="#f23645"/><rect x="978.4" y="170.7" width="3.9" height="18.4" fill="#089981"/><rect x="982.1" y="172.1" width="3.9" height="27.9" fill="#f23645"/><rect x="985.9" y="192.5" width="3.9" height="2.7" fill="#f23645"/><rect x="989.7" y="189.8" width="3.9" height="23.8" fill="#f23645"/><rect x="993.5" y="209.5" width="3.9" height="8.2" fill="#f23645"/><rect x="997.3" y="201.4" width="3.9" height="16.3" fill="#089981"/><rect x="1001.0" y="164.6" width="3.9" height="37.4" fill="#089981"/><rect x="1004.8" y="165.3" width="3.9" height="13.6" fill="#f23645"/><rect x="1008.6" y="161.9" width="3.9" height="13.6" fill="#089981"/><rect x="1012.4" y="159.2" width="3.9" height="2.7" fill="#089981"/><rect x="1016.1" y="159.2" width="3.9" height="10.9" fill="#f23645"/><rect x="1019.9" y="166.7" width="3.9" height="1.4" fill="#089981"/><rect x="1023.7" y="148.3" width="3.9" height="18.4" fill="#089981"/><rect x="1027.5" y="143.5" width="3.9" height="5.4" fill="#f23645"/><rect x="1031.2" y="149.7" width="3.9" height="18.4" fill="#f23645"/><rect x="1035.0" y="164.6" width="3.9" height="2.0" fill="#089981"/><rect x="1038.8" y="138.8" width="3.9" height="24.5" fill="#089981"/><rect x="1042.6" y="137.4" width="3.9" height="25.9" fill="#f23645"/><rect x="1046.3" y="149.0" width="3.9" height="11.6" fill="#089981"/><rect x="1050.1" y="149.0" width="3.9" height="4.8" fill="#f23645"/><rect x="1053.9" y="138.1" width="3.9" height="14.3" fill="#089981"/><rect x="1057.7" y="136.7" width="3.9" height="8.8" fill="#f23645"/><rect x="1061.4" y="146.3" width="3.9" height="6.1" fill="#f23645"/><rect x="1065.2" y="151.7" width="3.9" height="19.0" fill="#f23645"/><rect x="1069.0" y="156.5" width="3.9" height="14.3" fill="#089981"/><rect x="1072.8" y="157.8" width="3.9" height="6.1" fill="#f23645"/><rect x="1076.6" y="151.2" width="3.9" height="12.9" fill="#089981"/><rect x="1080.3" y="142.4" width="3.9" height="8.8" fill="#089981"/><rect x="1084.1" y="134.2" width="3.9" height="8.2" fill="#089981"/><rect x="1087.9" y="125.4" width="3.9" height="9.5" fill="#089981"/><rect x="1091.7" y="124.7" width="3.9" height="1.4" fill="#089981"/><rect x="1095.4" y="126.1" width="3.9" height="10.2" fill="#f23645"/><rect x="1099.2" y="136.3" width="3.9" height="16.3" fill="#f23645"/><rect x="1103.0" y="151.9" width="3.9" height="2.0" fill="#f23645"/><rect x="1106.8" y="148.5" width="3.9" height="8.8" fill="#089981"/><rect x="1110.5" y="124.0" width="3.9" height="22.4" fill="#089981"/><rect x="1114.3" y="125.4" width="3.9" height="19.7" fill="#f23645"/><rect x="1118.1" y="142.4" width="3.9" height="1.4" fill="#089981"/><rect x="1121.9" y="142.4" width="3.9" height="8.8" fill="#f23645"/><rect x="1125.6" y="151.9" width="3.9" height="6.8" fill="#f23645"/><rect x="1129.4" y="142.4" width="3.9" height="16.3" fill="#089981"/><rect x="1133.2" y="135.6" width="3.9" height="10.2" fill="#089981"/><rect x="1137.0" y="135.6" width="3.9" height="8.2" fill="#f23645"/><rect x="1140.8" y="142.4" width="3.9" height="29.3" fill="#f23645"/><rect x="1144.5" y="171.0" width="3.9" height="1.0" fill="#089981"/><rect x="1148.3" y="164.1" width="3.9" height="7.5" fill="#089981"/><rect x="1152.1" y="164.8" width="3.9" height="2.7" fill="#f23645"/><rect x="1155.9" y="185.4" width="3.9" height="81.7" fill="#f23645"/><rect x="1159.6" y="275.3" width="3.9" height="16.3" fill="#f23645"/><rect x="1163.4" y="236.3" width="3.9" height="56.3" fill="#089981"/><rect x="1167.2" y="207.2" width="3.9" height="29.1" fill="#089981"/><rect x="1171.0" y="196.3" width="3.9" height="10.9" fill="#089981"/><rect x="1174.7" y="193.6" width="3.9" height="40.9" fill="#f23645"/><rect x="1178.5" y="232.6" width="3.9" height="1.8" fill="#089981"/><rect x="1182.3" y="233.5" width="3.9" height="62.6" fill="#f23645"/><rect x="1186.1" y="279.8" width="3.9" height="21.8" fill="#089981"/><rect x="1189.8" y="279.8" width="3.9" height="1.8" fill="#089981"/><rect x="1193.6" y="271.7" width="3.9" height="8.2" fill="#f23645"/><rect x="1197.4" y="279.8" width="3.9" height="13.6" fill="#f23645"/><rect x="1201.2" y="285.3" width="3.9" height="8.2" fill="#089981"/><rect x="1204.9" y="264.4" width="3.9" height="21.8" fill="#089981"/><rect x="1208.7" y="268.0" width="3.9" height="18.2" fill="#f23645"/><rect x="1212.5" y="286.2" width="3.9" height="1.8" fill="#089981"/><rect x="1216.3" y="287.1" width="3.9" height="1.8" fill="#f23645"/><rect x="1220.1" y="288.0" width="3.9" height="27.2" fill="#f23645"/><rect x="1223.8" y="310.7" width="3.9" height="16.3" fill="#f23645"/><rect x="1227.6" y="298.0" width="3.9" height="32.7" fill="#089981"/><rect x="1231.4" y="289.8" width="3.9" height="7.3" fill="#089981"/><rect x="1235.2" y="267.1" width="3.9" height="22.7" fill="#089981"/><rect x="1238.9" y="268.0" width="3.9" height="10.9" fill="#f23645"/><rect x="1242.7" y="268.9" width="3.9" height="10.0" fill="#089981"/><rect x="1246.5" y="266.9" width="3.9" height="8.0" fill="#089981"/><rect x="1250.3" y="249.9" width="3.9" height="18.0" fill="#089981"/><rect x="1254.0" y="238.9" width="3.9" height="11.5" fill="#089981"/><rect x="1257.8" y="220.4" width="3.9" height="19.0" fill="#089981"/><rect x="1261.6" y="220.9" width="3.9" height="6.5" fill="#f23645"/><rect x="1265.4" y="214.9" width="3.9" height="12.0" fill="#089981"/><rect x="1269.1" y="214.9" width="3.9" height="5.0" fill="#f23645"/><rect x="1272.9" y="218.4" width="3.9" height="5.5" fill="#f23645"/><rect x="1276.7" y="222.9" width="3.9" height="7.0" fill="#f23645"/><rect x="1280.5" y="224.9" width="3.9" height="6.0" fill="#f23645"/><rect x="1284.2" y="229.4" width="3.9" height="3.5" fill="#089981"/><rect x="1288.0" y="213.4" width="3.9" height="17.5" fill="#089981"/><rect x="1291.8" y="208.5" width="3.9" height="4.5" fill="#089981"/><rect x="1295.6" y="208.5" width="3.9" height="2.0" fill="#f23645"/><rect x="1299.4" y="209.5" width="3.9" height="6.0" fill="#f23645"/><rect x="1303.1" y="204.5" width="3.9" height="11.0" fill="#089981"/><rect x="1306.9" y="204.0" width="3.9" height="10.0" fill="#f23645"/><rect x="1310.7" y="214.4" width="3.9" height="14.5" fill="#f23645"/><rect x="1314.5" y="224.9" width="3.9" height="1.0" fill="#089981"/><rect x="1318.2" y="214.9" width="3.9" height="11.5" fill="#089981"/><rect x="1322.0" y="214.9" width="3.9" height="2.5" fill="#f23645"/><rect x="1325.8" y="214.9" width="3.9" height="2.5" fill="#089981"/></g>
<rect x="14" y="851.1" width="1476" height="100.6" fill="#7e57c2" fill-opacity="0.1"/>
<defs><linearGradient id="obg" x1="0" y1="0" x2="0" y2="1"><stop offset="0" stop-color="#4caf50" stop-opacity="0.45"/><stop offset="1" stop-color="#4caf50" stop-opacity="0.03"/></linearGradient><linearGradient id="osg" x1="0" y1="0" x2="0" y2="1"><stop offset="0" stop-color="#f23645" stop-opacity="0.03"/><stop offset="1" stop-color="#f23645" stop-opacity="0.35"/></linearGradient><clipPath id="obc"><polygon points="13.7,851.1 13.7,887.6 18.0,885.3 21.5,875.9 24.9,877.6 29.2,873.3 32.7,880.2 36.1,888.8 40.4,896.6 44.4,902.6 48.2,894.0 51.3,896.9 55.1,896.6 58.6,890.5 63.2,878.4 66.3,887.9 69.8,904.3 73.2,889.7 77.9,844.8 81.8,873.3 85.8,864.7 90.4,881.4 93.9,880.7 97.3,876.7 100.8,874.5 105.1,862.1 110.3,847.4 115.4,844.0 119.8,854.8 123.7,848.3 127.9,859.5 130.1,856.6 133.6,869.0 137.9,869.0 143.0,876.7 149.9,881.9 153.4,892.8 157.7,885.9 161.1,887.6 165.4,884.5 169.8,875.5 174.9,877.9 181.0,869.0 187.9,856.9 191.3,846.6 193.9,822.4 197.3,817.2 201.7,822.4 206.8,837.1 212.9,834.5 218.0,829.3 225.8,828.4 229.2,822.4 234.4,824.1 240.4,838.8 244.4,856.9 248.6,851.4 255.1,863.8 259.4,887.6 263.4,870.7 269.8,868.1 274.1,863.8 278.4,856.9 282.0,867.2 288.4,854.8 293.6,852.6 299.6,846.6 304.8,841.4 308.2,836.2 312.0,829.0 315.1,851.7 319.4,848.3 323.7,839.7 327.2,873.3 330.3,882.8 334.9,878.4 338.4,876.7 342.7,856.0 346.1,865.9 349.2,864.7 353.0,892.2 357.3,901.7 361.3,910.3 366.0,902.6 369.4,898.6 372.3,898.6 375.8,918.6 379.8,916.9 384.1,919.0 388.4,912.1 394.8,934.1 399.2,919.0 403.0,914.7 409.4,903.8 413.4,910.3 418.2,921.6 421.7,912.9 425.8,929.0 432.3,913.4 435.8,917.2 441.0,931.9 444.9,901.7 448.7,896.6 452.2,896.2 455.1,897.4 459.1,889.7 463.0,887.6 467.7,893.1 472.9,895.2 478.0,886.2 486.3,875.5 488.9,907.8 493.0,904.3 497.0,919.3 501.3,899.7 505.1,896.9 507.9,881.4 512.2,889.3 516.0,882.8 519.9,868.6 524.1,878.4 528.0,863.8 531.5,858.6 534.9,856.6 538.9,858.6 542.7,874.1 549.2,857.8 553.6,862.9 557.9,872.4 562.2,875.5 565.1,876.7 572.5,888.8 576.5,903.4 580.3,903.8 584.6,895.7 588.9,905.2 591.5,912.1 595.4,915.9 600.1,937.9 603.0,954.3 607.0,957.8 611.3,960.0 614.8,959.5 617.9,957.8 619.6,924.1 622.0,883.6 626.0,878.4 628.9,885.9 632.9,879.7 636.8,862.9 641.0,854.8 644.9,880.2 648.4,886.2 651.8,890.0 656.1,891.0 660.4,888.8 663.9,884.5 667.3,910.3 669.9,919.0 673.7,918.1 678.2,921.6 682.3,930.2 686.3,937.1 689.2,925.0 694.1,922.8 697.9,920.7 701.8,903.4 705.3,887.9 707.9,884.5 712.2,892.2 716.1,879.7 719.9,880.2 723.7,885.3 727.2,886.2 730.6,874.1 735.1,871.6 738.6,884.5 741.5,889.7 746.7,883.6 749.6,889.7 753.6,875.9 757.9,874.1 761.7,889.3 765.6,882.8 772.5,899.7 776.5,896.2 780.6,909.5 784.6,911.2 788.9,892.2 791.5,882.8 794.9,844.0 799.2,840.0 803.2,865.2 806.7,856.9 811.0,854.3 814.4,847.4 818.2,839.7 822.2,850.3 827.3,846.6 833.4,838.3 837.2,838.3 841.1,848.3 847.2,840.5 851.5,822.1 855.8,819.0 860.1,835.3 863.6,844.8 867.0,849.1 870.4,849.7 874.4,843.1 878.6,849.1 882.5,844.0 886.5,843.1 889.4,865.2 892.9,864.7 896.3,860.3 901.5,851.4 905.8,851.4 908.9,843.1 916.1,835.3 919.9,856.0 927.3,878.4 933.4,875.0 938.6,874.5 943.7,876.7 946.3,874.1 950.3,864.7 954.1,840.5 957.5,849.1 961.8,852.6 966.1,862.9 972.7,853.1 976.5,870.7 980.4,860.3 984.8,887.1 987.3,884.5 991.1,898.6 995.8,902.9 999.8,887.9 1003.7,869.0 1006.3,880.2 1010.1,871.0 1014.4,869.8 1018.2,879.3 1021.3,878.4 1025.1,866.9 1029.1,866.9 1033.0,885.3 1037.7,882.4 1041.5,867.6 1045.1,886.6 1048.6,879.7 1052.0,882.4 1055.8,874.5 1060.2,879.8 1063.8,885.2 1066.9,900.6 1071.0,890.3 1074.7,896.1 1081.9,879.8 1086.4,873.4 1090.1,870.3 1094.1,870.3 1098.2,885.2 1101.8,897.0 1105.5,898.8 1108.6,895.2 1112.7,875.8 1116.3,893.9 1120.0,892.4 1123.6,897.9 1127.2,906.0 1131.8,892.4 1135.0,887.0 1139.9,896.1 1143.5,917.5 1146.3,916.9 1150.8,909.7 1154.4,912.4 1157.5,960.4 1162.0,968.2 1165.3,929.6 1168.9,915.1 1173.1,908.8 1176.7,924.2 1180.7,922.9 1184.9,943.6 1187.6,935.6 1192.5,929.1 1196.1,932.7 1199.7,937.4 1203.4,934.1 1206.4,920.5 1210.6,929.6 1215.1,929.1 1218.8,930.5 1225.1,945.0 1229.3,925.1 1233.3,918.7 1237.4,906.9 1241.4,913.3 1247.8,905.1 1252.3,895.2 1255.9,888.8 1260.1,879.8 1263.2,884.3 1266.8,877.9 1274.9,884.3 1279.5,887.0 1283.1,890.6 1285.8,890.3 1289.4,878.8 1294.0,874.7 1297.6,876.1 1302.1,881.6 1304.9,874.3 1309.0,887.0 1313.0,898.8 1317.0,897.5 1320.3,887.4 1323.0,889.2 1327.5,886.6 1327.5,851.1"/></clipPath><clipPath id="osc"><polygon points="13.7,951.8 13.7,887.6 18.0,885.3 21.5,875.9 24.9,877.6 29.2,873.3 32.7,880.2 36.1,888.8 40.4,896.6 44.4,902.6 48.2,894.0 51.3,896.9 55.1,896.6 58.6,890.5 63.2,878.4 66.3,887.9 69.8,904.3 73.2,889.7 77.9,844.8 81.8,873.3 85.8,864.7 90.4,881.4 93.9,880.7 97.3,876.7 100.8,874.5 105.1,862.1 110.3,847.4 115.4,844.0 119.8,854.8 123.7,848.3 127.9,859.5 130.1,856.6 133.6,869.0 137.9,869.0 143.0,876.7 149.9,881.9 153.4,892.8 157.7,885.9 161.1,887.6 165.4,884.5 169.8,875.5 174.9,877.9 181.0,869.0 187.9,856.9 191.3,846.6 193.9,822.4 197.3,817.2 201.7,822.4 206.8,837.1 212.9,834.5 218.0,829.3 225.8,828.4 229.2,822.4 234.4,824.1 240.4,838.8 244.4,856.9 248.6,851.4 255.1,863.8 259.4,887.6 263.4,870.7 269.8,868.1 274.1,863.8 278.4,856.9 282.0,867.2 288.4,854.8 293.6,852.6 299.6,846.6 304.8,841.4 308.2,836.2 312.0,829.0 315.1,851.7 319.4,848.3 323.7,839.7 327.2,873.3 330.3,882.8 334.9,878.4 338.4,876.7 342.7,856.0 346.1,865.9 349.2,864.7 353.0,892.2 357.3,901.7 361.3,910.3 366.0,902.6 369.4,898.6 372.3,898.6 375.8,918.6 379.8,916.9 384.1,919.0 388.4,912.1 394.8,934.1 399.2,919.0 403.0,914.7 409.4,903.8 413.4,910.3 418.2,921.6 421.7,912.9 425.8,929.0 432.3,913.4 435.8,917.2 441.0,931.9 444.9,901.7 448.7,896.6 452.2,896.2 455.1,897.4 459.1,889.7 463.0,887.6 467.7,893.1 472.9,895.2 478.0,886.2 486.3,875.5 488.9,907.8 493.0,904.3 497.0,919.3 501.3,899.7 505.1,896.9 507.9,881.4 512.2,889.3 516.0,882.8 519.9,868.6 524.1,878.4 528.0,863.8 531.5,858.6 534.9,856.6 538.9,858.6 542.7,874.1 549.2,857.8 553.6,862.9 557.9,872.4 562.2,875.5 565.1,876.7 572.5,888.8 576.5,903.4 580.3,903.8 584.6,895.7 588.9,905.2 591.5,912.1 595.4,915.9 600.1,937.9 603.0,954.3 607.0,957.8 611.3,960.0 614.8,959.5 617.9,957.8 619.6,924.1 622.0,883.6 626.0,878.4 628.9,885.9 632.9,879.7 636.8,862.9 641.0,854.8 644.9,880.2 648.4,886.2 651.8,890.0 656.1,891.0 660.4,888.8 663.9,884.5 667.3,910.3 669.9,919.0 673.7,918.1 678.2,921.6 682.3,930.2 686.3,937.1 689.2,925.0 694.1,922.8 697.9,920.7 701.8,903.4 705.3,887.9 707.9,884.5 712.2,892.2 716.1,879.7 719.9,880.2 723.7,885.3 727.2,886.2 730.6,874.1 735.1,871.6 738.6,884.5 741.5,889.7 746.7,883.6 749.6,889.7 753.6,875.9 757.9,874.1 761.7,889.3 765.6,882.8 772.5,899.7 776.5,896.2 780.6,909.5 784.6,911.2 788.9,892.2 791.5,882.8 794.9,844.0 799.2,840.0 803.2,865.2 806.7,856.9 811.0,854.3 814.4,847.4 818.2,839.7 822.2,850.3 827.3,846.6 833.4,838.3 837.2,838.3 841.1,848.3 847.2,840.5 851.5,822.1 855.8,819.0 860.1,835.3 863.6,844.8 867.0,849.1 870.4,849.7 874.4,843.1 878.6,849.1 882.5,844.0 886.5,843.1 889.4,865.2 892.9,864.7 896.3,860.3 901.5,851.4 905.8,851.4 908.9,843.1 916.1,835.3 919.9,856.0 927.3,878.4 933.4,875.0 938.6,874.5 943.7,876.7 946.3,874.1 950.3,864.7 954.1,840.5 957.5,849.1 961.8,852.6 966.1,862.9 972.7,853.1 976.5,870.7 980.4,860.3 984.8,887.1 987.3,884.5 991.1,898.6 995.8,902.9 999.8,887.9 1003.7,869.0 1006.3,880.2 1010.1,871.0 1014.4,869.8 1018.2,879.3 1021.3,878.4 1025.1,866.9 1029.1,866.9 1033.0,885.3 1037.7,882.4 1041.5,867.6 1045.1,886.6 1048.6,879.7 1052.0,882.4 1055.8,874.5 1060.2,879.8 1063.8,885.2 1066.9,900.6 1071.0,890.3 1074.7,896.1 1081.9,879.8 1086.4,873.4 1090.1,870.3 1094.1,870.3 1098.2,885.2 1101.8,897.0 1105.5,898.8 1108.6,895.2 1112.7,875.8 1116.3,893.9 1120.0,892.4 1123.6,897.9 1127.2,906.0 1131.8,892.4 1135.0,887.0 1139.9,896.1 1143.5,917.5 1146.3,916.9 1150.8,909.7 1154.4,912.4 1157.5,960.4 1162.0,968.2 1165.3,929.6 1168.9,915.1 1173.1,908.8 1176.7,924.2 1180.7,922.9 1184.9,943.6 1187.6,935.6 1192.5,929.1 1196.1,932.7 1199.7,937.4 1203.4,934.1 1206.4,920.5 1210.6,929.6 1215.1,929.1 1218.8,930.5 1225.1,945.0 1229.3,925.1 1233.3,918.7 1237.4,906.9 1241.4,913.3 1247.8,905.1 1252.3,895.2 1255.9,888.8 1260.1,879.8 1263.2,884.3 1266.8,877.9 1274.9,884.3 1279.5,887.0 1283.1,890.6 1285.8,890.3 1289.4,878.8 1294.0,874.7 1297.6,876.1 1302.1,881.6 1304.9,874.3 1309.0,887.0 1313.0,898.8 1317.0,897.5 1320.3,887.4 1323.0,889.2 1327.5,886.6 1327.5,951.8"/></clipPath></defs>
<rect x="14" y="815.1" width="1476" height="36" fill="url(#obg)" clip-path="url(#obc)"/>
<rect x="14" y="951.8" width="1476" height="22" fill="url(#osg)" clip-path="url(#osc)"/>
<line x1="14" y1="851.1" x2="1490" y2="851.1" stroke="#74767f" stroke-width="1.2" stroke-dasharray="6.9 7.86"/>
<line x1="14" y1="901.5" x2="1490" y2="901.5" stroke="#74767f" stroke-width="1.2" stroke-dasharray="6.9 7.86"/>
<line x1="14" y1="951.8" x2="1490" y2="951.8" stroke="#74767f" stroke-width="1.2" stroke-dasharray="6.9 7.86"/>
<polyline points="13.7,887.6 18.0,885.3 21.5,875.9 24.9,877.6 29.2,873.3 32.7,880.2 36.1,888.8 40.4,896.6 44.4,902.6 48.2,894.0 51.3,896.9 55.1,896.6 58.6,890.5 63.2,878.4 66.3,887.9 69.8,904.3 73.2,889.7 77.9,844.8 81.8,873.3 85.8,864.7 90.4,881.4 93.9,880.7 97.3,876.7 100.8,874.5 105.1,862.1 110.3,847.4 115.4,844.0 119.8,854.8 123.7,848.3 127.9,859.5 130.1,856.6 133.6,869.0 137.9,869.0 143.0,876.7 149.9,881.9 153.4,892.8 157.7,885.9 161.1,887.6 165.4,884.5 169.8,875.5 174.9,877.9 181.0,869.0 187.9,856.9 191.3,846.6 193.9,822.4 197.3,817.2 201.7,822.4 206.8,837.1 212.9,834.5 218.0,829.3 225.8,828.4 229.2,822.4 234.4,824.1 240.4,838.8 244.4,856.9 248.6,851.4 255.1,863.8 259.4,887.6 263.4,870.7 269.8,868.1 274.1,863.8 278.4,856.9 282.0,867.2 288.4,854.8 293.6,852.6 299.6,846.6 304.8,841.4 308.2,836.2 312.0,829.0 315.1,851.7 319.4,848.3 323.7,839.7 327.2,873.3 330.3,882.8 334.9,878.4 338.4,876.7 342.7,856.0 346.1,865.9 349.2,864.7 353.0,892.2 357.3,901.7 361.3,910.3 366.0,902.6 369.4,898.6 372.3,898.6 375.8,918.6 379.8,916.9 384.1,919.0 388.4,912.1 394.8,934.1 399.2,919.0 403.0,914.7 409.4,903.8 413.4,910.3 418.2,921.6 421.7,912.9 425.8,929.0 432.3,913.4 435.8,917.2 441.0,931.9 444.9,901.7 448.7,896.6 452.2,896.2 455.1,897.4 459.1,889.7 463.0,887.6 467.7,893.1 472.9,895.2 478.0,886.2 486.3,875.5 488.9,907.8 493.0,904.3 497.0,919.3 501.3,899.7 505.1,896.9 507.9,881.4 512.2,889.3 516.0,882.8 519.9,868.6 524.1,878.4 528.0,863.8 531.5,858.6 534.9,856.6 538.9,858.6 542.7,874.1 549.2,857.8 553.6,862.9 557.9,872.4 562.2,875.5 565.1,876.7 572.5,888.8 576.5,903.4 580.3,903.8 584.6,895.7 588.9,905.2 591.5,912.1 595.4,915.9 600.1,937.9 603.0,954.3 607.0,957.8 611.3,960.0 614.8,959.5 617.9,957.8 619.6,924.1 622.0,883.6 626.0,878.4 628.9,885.9 632.9,879.7 636.8,862.9 641.0,854.8 644.9,880.2 648.4,886.2 651.8,890.0 656.1,891.0 660.4,888.8 663.9,884.5 667.3,910.3 669.9,919.0 673.7,918.1 678.2,921.6 682.3,930.2 686.3,937.1 689.2,925.0 694.1,922.8 697.9,920.7 701.8,903.4 705.3,887.9 707.9,884.5 712.2,892.2 716.1,879.7 719.9,880.2 723.7,885.3 727.2,886.2 730.6,874.1 735.1,871.6 738.6,884.5 741.5,889.7 746.7,883.6 749.6,889.7 753.6,875.9 757.9,874.1 761.7,889.3 765.6,882.8 772.5,899.7 776.5,896.2 780.6,909.5 784.6,911.2 788.9,892.2 791.5,882.8 794.9,844.0 799.2,840.0 803.2,865.2 806.7,856.9 811.0,854.3 814.4,847.4 818.2,839.7 822.2,850.3 827.3,846.6 833.4,838.3 837.2,838.3 841.1,848.3 847.2,840.5 851.5,822.1 855.8,819.0 860.1,835.3 863.6,844.8 867.0,849.1 870.4,849.7 874.4,843.1 878.6,849.1 882.5,844.0 886.5,843.1 889.4,865.2 892.9,864.7 896.3,860.3 901.5,851.4 905.8,851.4 908.9,843.1 916.1,835.3 919.9,856.0 927.3,878.4 933.4,875.0 938.6,874.5 943.7,876.7 946.3,874.1 950.3,864.7 954.1,840.5 957.5,849.1 961.8,852.6 966.1,862.9 972.7,853.1 976.5,870.7 980.4,860.3 984.8,887.1 987.3,884.5 991.1,898.6 995.8,902.9 999.8,887.9 1003.7,869.0 1006.3,880.2 1010.1,871.0 1014.4,869.8 1018.2,879.3 1021.3,878.4 1025.1,866.9 1029.1,866.9 1033.0,885.3 1037.7,882.4 1041.5,867.6 1045.1,886.6 1048.6,879.7 1052.0,882.4 1055.8,874.5 1060.2,879.8 1063.8,885.2 1066.9,900.6 1071.0,890.3 1074.7,896.1 1081.9,879.8 1086.4,873.4 1090.1,870.3 1094.1,870.3 1098.2,885.2 1101.8,897.0 1105.5,898.8 1108.6,895.2 1112.7,875.8 1116.3,893.9 1120.0,892.4 1123.6,897.9 1127.2,906.0 1131.8,892.4 1135.0,887.0 1139.9,896.1 1143.5,917.5 1146.3,916.9 1150.8,909.7 1154.4,912.4 1157.5,960.4 1162.0,968.2 1165.3,929.6 1168.9,915.1 1173.1,908.8 1176.7,924.2 1180.7,922.9 1184.9,943.6 1187.6,935.6 1192.5,929.1 1196.1,932.7 1199.7,937.4 1203.4,934.1 1206.4,920.5 1210.6,929.6 1215.1,929.1 1218.8,930.5 1225.1,945.0 1229.3,925.1 1233.3,918.7 1237.4,906.9 1241.4,913.3 1247.8,905.1 1252.3,895.2 1255.9,888.8 1260.1,879.8 1263.2,884.3 1266.8,877.9 1274.9,884.3 1279.5,887.0 1283.1,890.6 1285.8,890.3 1289.4,878.8 1294.0,874.7 1297.6,876.1 1302.1,881.6 1304.9,874.3 1309.0,887.0 1313.0,898.8 1317.0,897.5 1320.3,887.4 1323.0,889.2 1327.5,886.6" fill="none" stroke="#7e57c2" stroke-width="1.6" stroke-linejoin="round" clip-path="url(#rsiclip)"/>
<polyline points="13.7,861.2 18.9,865.5 27.5,869.0 37.9,873.3 48.2,878.4 53.4,883.6 60.3,887.1 72.3,889.3 81.0,887.1 89.6,885.3 101.7,881.0 112.0,872.4 120.6,867.2 127.5,862.1 136.1,862.4 148.2,861.7 155.1,864.7 163.7,870.7 172.3,875.9 182.7,878.1 189.6,876.7 198.2,868.1 208.6,856.9 218.9,846.6 227.5,837.9 234.4,831.0 241.3,829.0 246.5,831.0 253.4,836.2 262.0,843.1 270.6,849.1 272.0,850.0 278.9,855.2 285.8,860.3 292.7,862.9 303.0,861.7 308.2,859.0 312.0,854.3 318.6,852.2 323.7,850.0 330.6,852.6 337.5,854.3 344.4,855.2 350.4,857.8 358.2,865.5 365.1,873.3 370.3,878.4 375.4,886.2 382.3,891.4 389.2,895.7 396.1,904.3 404.8,912.1 413.4,912.9 420.3,914.7 427.2,917.2 434.1,917.2 441.0,918.6 446.1,916.4 451.3,912.9 458.2,910.3 466.8,907.2 475.4,903.1 485.8,895.7 492.7,893.1 497.9,894.5 504.8,894.8 515.1,893.4 523.7,889.7 530.6,885.9 537.5,882.8 538.9,882.8 546.7,877.6 551.0,872.4 557.9,869.0 567.3,868.1 573.4,870.3 583.7,876.7 594.1,886.2 601.0,895.7 607.9,908.6 613.9,918.1 619.1,923.8 625.1,923.3 633.7,919.0 642.3,912.9 651.8,906.0 661.3,894.8 669.9,885.3 676.8,889.7 685.4,897.4 692.3,906.0 700.1,912.1 706.1,912.1 714.8,911.7 721.7,908.3 730.3,901.7 738.9,894.0 747.5,887.9 754.4,883.6 764.8,882.8 776.8,885.3 785.4,889.7 789.8,891.4 795.8,887.1 800.6,884.5 811.0,879.3 823.0,870.3 831.7,859.5 838.6,851.4 844.6,846.9 851.5,845.2 858.4,841.0 864.4,840.0 874.8,840.5 885.1,840.5 890.3,842.8 900.6,845.2 909.2,849.7 916.1,849.1 923.0,850.3 929.9,854.8 938.6,859.5 948.9,861.7 957.5,861.2 962.7,862.4 967.9,865.2 974.8,865.2 981.7,864.1 988.6,866.4 995.4,869.0 1002.3,870.3 1007.5,873.8 1016.1,876.7 1024.8,879.3 1033.4,880.3 1042.0,879.0 1048.9,876.2 1055.8,875.9 1059.3,876.1 1066.5,879.4 1073.8,881.6 1081.9,884.3 1090.1,883.0 1097.3,883.0 1108.2,886.6 1115.4,887.0 1120.9,886.6 1129.9,888.5 1139.0,889.2 1148.1,897.5 1155.3,899.7 1160.8,906.9 1166.2,913.8 1173.4,916.0 1180.7,918.7 1187.9,926.0 1193.4,928.7 1200.6,931.4 1206.1,933.2 1215.1,928.3 1220.6,929.1 1226.9,932.7 1233.3,932.7 1240.5,929.1 1248.7,925.1 1256.8,918.7 1264.1,913.3 1271.3,905.5 1280.4,897.5 1289.4,891.5 1298.5,885.2 1305.8,881.9 1313.0,883.0 1322.1,885.2 1327.5,885.6" fill="none" stroke="#e5c42c" stroke-width="1.75" stroke-linejoin="round" clip-path="url(#rsiclip)"/>
<defs><clipPath id="axclip"><rect x="1490" y="37.3" width="97" height="761"/></clipPath></defs>
<text x="1502.6" y="44.5" font-size="16" letter-spacing="0.95" fill="#b4b4b6" stroke="#b4b4b6" stroke-width="0.3" clip-path="url(#axclip)">4,900.00</text>
<text x="1502.6" y="113.2" font-size="16" letter-spacing="0.95" fill="#b4b4b6" stroke="#b4b4b6" stroke-width="0.3" clip-path="url(#axclip)">4,800.00</text>
<text x="1502.6" y="182.0" font-size="16" letter-spacing="0.95" fill="#b4b4b6" stroke="#b4b4b6" stroke-width="0.3" clip-path="url(#axclip)">4,700.00</text>
<text x="1502.6" y="250.7" font-size="16" letter-spacing="0.95" fill="#b4b4b6" stroke="#b4b4b6" stroke-width="0.3" clip-path="url(#axclip)">4,600.00</text>
<text x="1502.6" y="319.4" font-size="16" letter-spacing="0.95" fill="#b4b4b6" stroke="#b4b4b6" stroke-width="0.3" clip-path="url(#axclip)">4,500.00</text>
<text x="1502.6" y="388.1" font-size="16" letter-spacing="0.95" fill="#b4b4b6" stroke="#b4b4b6" stroke-width="0.3" clip-path="url(#axclip)">4,400.00</text>
<text x="1502.6" y="456.8" font-size="16" letter-spacing="0.95" fill="#b4b4b6" stroke="#b4b4b6" stroke-width="0.3" clip-path="url(#axclip)">4,300.00</text>
<text x="1502.6" y="525.5" font-size="16" letter-spacing="0.95" fill="#b4b4b6" stroke="#b4b4b6" stroke-width="0.3" clip-path="url(#axclip)">4,200.00</text>
<text x="1502.6" y="594.2" font-size="16" letter-spacing="0.95" fill="#b4b4b6" stroke="#b4b4b6" stroke-width="0.3" clip-path="url(#axclip)">4,100.00</text>
<text x="1502.6" y="662.9" font-size="16" letter-spacing="0.95" fill="#b4b4b6" stroke="#b4b4b6" stroke-width="0.3" clip-path="url(#axclip)">4,000.00</text>
<text x="1502.6" y="731.6" font-size="16" letter-spacing="0.95" fill="#b4b4b6" stroke="#b4b4b6" stroke-width="0.3" clip-path="url(#axclip)">3,900.00</text>
<text x="1502.6" y="800.4" font-size="16" letter-spacing="0.95" fill="#b4b4b6" stroke="#b4b4b6" stroke-width="0.3" clip-path="url(#axclip)">3,800.00</text>
<rect x="1490" y="798.3" width="96" height="12" fill="#0f0f0f"/>
<line x1="14" y1="798.3" x2="1586" y2="798.3" stroke="#2e2e2e" stroke-width="1.6"/>
<text x="1502.6" y="831.2" font-size="16" letter-spacing="0.95" fill="#b4b4b6" stroke="#b4b4b6" stroke-width="0.3">80.00</text>
<text x="1502.6" y="931.8" font-size="16" letter-spacing="0.95" fill="#b4b4b6" stroke="#b4b4b6" stroke-width="0.3">40.00</text>
<text x="1502.6" y="982.1" font-size="16" letter-spacing="0.95" fill="#b4b4b6" stroke="#b4b4b6" stroke-width="0.3">20.00</text>
<text x="157.05" y="1010" font-size="16" letter-spacing="0.6" text-anchor="middle" fill="#b4b4b6" stroke="#b4b4b6" stroke-width="0.3">9</text>
<text x="338.31" y="1010" font-size="16" letter-spacing="0.6" text-anchor="middle" fill="#b4b4b6" stroke="#b4b4b6" stroke-width="0.3">10</text>
<text x="519.57" y="1010" font-size="16" letter-spacing="0.6" text-anchor="middle" fill="#b4b4b6" stroke="#b4b4b6" stroke-width="0.3" font-weight="bold">11</text>
<text x="700.83" y="1010" font-size="16" letter-spacing="0.6" text-anchor="middle" fill="#b4b4b6" stroke="#b4b4b6" stroke-width="0.3">12</text>
<text x="882.09" y="1010" font-size="16" letter-spacing="0.6" text-anchor="middle" fill="#b4b4b6" stroke="#b4b4b6" stroke-width="0.3">13</text>
<text x="1063.35" y="1010" font-size="16" letter-spacing="0.6" text-anchor="middle" fill="#b4b4b6" stroke="#b4b4b6" stroke-width="0.3">14</text>
<text x="1244.61" y="1010" font-size="16" letter-spacing="0.6" text-anchor="middle" fill="#b4b4b6" stroke="#b4b4b6" stroke-width="0.3">15</text>
<text x="1425.87" y="1010" font-size="16" letter-spacing="0.6" text-anchor="middle" fill="#b4b4b6" stroke="#b4b4b6" stroke-width="0.3">16</text>
<path d="M1491.2 179.7H1577.6Q1580.1 179.7 1580.1 182.2V200.9Q1580.1 203.4 1577.6 203.4H1491.2Z" fill="#4caf50"/>
<path d="M1491.2 203.4H1577.6Q1580.1 203.4 1580.1 205.9V242.3Q1580.1 244.8 1577.6 244.8H1491.2Z" fill="#089981"/>
<path d="M1491.2 244.8H1577.6Q1580.1 244.8 1580.1 247.3V265.4Q1580.1 267.9 1577.6 267.9H1491.2Z" fill="#2962ff"/>
<path d="M1491.2 267.9H1577.6Q1580.1 267.9 1580.1 270.4V288.3Q1580.1 290.8 1577.6 290.8H1491.2Z" fill="#4caf50"/>
<text x="1502.6" y="196.8" font-size="16" letter-spacing="0.95" fill="#ffffff" fill-opacity="1" stroke="#ffffff" stroke-opacity="1" stroke-width="0.3">4,654.59</text>
<text x="1502.6" y="219.8" font-size="16" letter-spacing="0.95" fill="#ffffff" fill-opacity="1" stroke="#ffffff" stroke-opacity="1" stroke-width="0.3">4,644.21</text>
<text x="1502.6" y="238.6" font-size="16" letter-spacing="0.95" fill="#ffffff" fill-opacity="0.75" stroke="#ffffff" stroke-opacity="0.75" stroke-width="0.3">17:12</text>
<text x="1502.6" y="261.5" font-size="16" letter-spacing="0.95" fill="#ffffff" fill-opacity="1" stroke="#ffffff" stroke-opacity="1" stroke-width="0.3">4,629.13</text>
<text x="1502.6" y="284.3" font-size="16" letter-spacing="0.95" fill="#ffffff" fill-opacity="1" stroke="#ffffff" stroke-opacity="1" stroke-width="0.3">4,603.67</text>
<path d="M1491.2 852.4H1551.9Q1554.4 852.4 1554.4 854.9V873.3Q1554.4 875.8 1551.9 875.8H1491.2Z" fill="#fdd835"/>
<path d="M1491.2 875.8H1551.9Q1554.4 875.8 1554.4 878.3V896.2Q1554.4 898.7 1551.9 898.7H1491.2Z" fill="#7e57c2"/>
<text x="1502.6" y="870" font-size="16" letter-spacing="0.95" fill="#131313" stroke="#131313" stroke-width="0.3">56.18</text>
<text x="1502.6" y="893.1" font-size="16" letter-spacing="0.95" fill="#ffffff" stroke="#ffffff" stroke-width="0.3">55.57</text>
<text x="13.8" y="26.8" font-size="16.6" fill="#dcdcdc" stroke="#dcdcdc" stroke-width="0.35" textLength="543.8" lengthAdjust="spacing">ChartAnalysis_4 created with TradingView.com, Aug 15, 2025 11:12 UTC</text>
<text x="24.5" y="62.5" font-size="16" fill="#cdcdcf" stroke="#cdcdcf" stroke-width="0.4" textLength="284.5" lengthAdjust="spacing">Ethereum / U.S. Dollar · 30 · BINANCE</text>
<text x="319.5" y="62.5" font-size="16" fill="#cdcdcf" stroke="#cdcdcf" stroke-width="0.4" textLength="11.5" lengthAdjust="spacing">O</text>
<text x="332" y="62.5" font-size="16" fill="#089981" stroke="#089981" stroke-width="0.4" textLength="65.5" lengthAdjust="spacing">4,640.77</text>
<text x="407.5" y="62.5" font-size="16" fill="#cdcdcf" stroke="#cdcdcf" stroke-width="0.4" textLength="11.2" lengthAdjust="spacing">H</text>
<text x="420" y="62.5" font-size="16" fill="#089981" stroke="#089981" stroke-width="0.4" textLength="67.0" lengthAdjust="spacing">4,650.53</text>
<text x="497" y="62.5" font-size="16" fill="#cdcdcf" stroke="#cdcdcf" stroke-width="0.4" textLength="8.0" lengthAdjust="spacing">L</text>
<text x="506" y="62.5" font-size="16" fill="#089981" stroke="#089981" stroke-width="0.4" textLength="67.0" lengthAdjust="spacing">4,640.62</text>
<text x="583.7" y="62.5" font-size="16" fill="#cdcdcf" stroke="#cdcdcf" stroke-width="0.4" textLength="10.0" lengthAdjust="spacing">C</text>
<text x="595" y="62.5" font-size="16" fill="#089981" stroke="#089981" stroke-width="0.4" textLength="65.0" lengthAdjust="spacing">4,644.21</text>
<text x="670.5" y="62.5" font-size="16" fill="#089981" stroke="#089981" stroke-width="0.4" textLength="117.0" lengthAdjust="spacing">+2.77 (+0.06%)</text>
<text x="24.5" y="86.2" font-size="16" fill="#cdcdcf" stroke="#cdcdcf" stroke-width="0.4" textLength="121.5" lengthAdjust="spacing">VWAP (Session)</text>
<text x="156" y="86.2" font-size="16" fill="#2962ff" stroke="#2962ff" stroke-width="0.4" textLength="65.0" lengthAdjust="spacing">4,629.13</text>
<text x="231" y="86.2" font-size="16" fill="#4caf50" stroke="#4caf50" stroke-width="0.4" textLength="67.7" lengthAdjust="spacing">4,654.59</text>
<text x="308.7" y="86.2" font-size="16" fill="#4caf50" stroke="#4caf50" stroke-width="0.4" textLength="66.3" lengthAdjust="spacing">4,603.67</text>
<text x="24.4" y="826.7" font-size="16" fill="#cdcdcf" stroke="#cdcdcf" stroke-width="0.4" textLength="107.4" lengthAdjust="spacing">RSI (14, close)</text>
<text x="142.7" y="826.7" font-size="16" fill="#7e57c2" stroke="#7e57c2" stroke-width="0.4" textLength="41.3" lengthAdjust="spacing">55.57</text>
<text x="194.8" y="826.7" font-size="16" fill="#fdd835" stroke="#fdd835" stroke-width="0.4" textLength="40.5" lengthAdjust="spacing">56.18</text>
<circle cx="1327.75" cy="781.2" r="14.4" fill="#0f0f0f"/>
<circle cx="1327.75" cy="781.2" r="13.2" fill="none" stroke="#ab47bc" stroke-width="2.2"/>
<path d="M1323.8 781.8l1.6-1.6M1324.2 787.6l1.6-2" stroke="#ab47bc" stroke-width="1.2"/>
<circle cx="1351" cy="781" r="14.4" fill="#0f0f0f"/>
<circle cx="1351" cy="781" r="13.2" fill="none" stroke="#f23645" stroke-width="2.2"/>
<defs><clipPath id="fc13510"><circle cx="1351" cy="781" r="10.6"/></clipPath></defs>
<g clip-path="url(#fc13510)"><rect x="1340" y="770.40" width="22" height="4.34" fill="#ef5350"/><rect x="1340" y="774.64" width="22" height="4.34" fill="#ffffff"/><rect x="1340" y="778.88" width="22" height="4.34" fill="#ef5350"/><rect x="1340" y="783.12" width="22" height="4.34" fill="#ffffff"/><rect x="1340" y="787.36" width="22" height="4.34" fill="#ef5350"/><rect x="1340" y="770.40" width="13.5" height="12.72" fill="#1e88e5"/><rect x="1342.80" y="772.70" width="1.4" height="1.4" fill="#ffffff"/><rect x="1342.80" y="776.20" width="1.4" height="1.4" fill="#ffffff"/><rect x="1342.80" y="779.90" width="1.4" height="1.4" fill="#ffffff"/><rect x="1346.30" y="772.70" width="1.4" height="1.4" fill="#ffffff"/><rect x="1346.30" y="776.20" width="1.4" height="1.4" fill="#ffffff"/><rect x="1346.30" y="779.90" width="1.4" height="1.4" fill="#ffffff"/><rect x="1350.00" y="772.70" width="1.4" height="1.4" fill="#ffffff"/><rect x="1350.00" y="776.20" width="1.4" height="1.4" fill="#ffffff"/><rect x="1350.00" y="779.90" width="1.4" height="1.4" fill="#ffffff"/></g>
<circle cx="1338.75" cy="781" r="14.4" fill="#0f0f0f"/>
<circle cx="1338.75" cy="781" r="13.2" fill="none" stroke="#f23645" stroke-width="2.2"/>
<defs><clipPath id="fc13387"><circle cx="1338.75" cy="781" r="10.6"/></clipPath></defs>
<g clip-path="url(#fc13387)"><rect x="1327.75" y="770.40" width="22" height="4.34" fill="#ef5350"/><rect x="1327.75" y="774.64" width="22" height="4.34" fill="#ffffff"/><rect x="1327.75" y="778.88" width="22" height="4.34" fill="#ef5350"/><rect x="1327.75" y="783.12" width="22" height="4.34" fill="#ffffff"/><rect x="1327.75" y="787.36" width="22" height="4.34" fill="#ef5350"/><rect x="1327.75" y="770.40" width="13.5" height="12.72" fill="#1e88e5"/><rect x="1330.55" y="772.70" width="1.4" height="1.4" fill="#ffffff"/><rect x="1330.55" y="776.20" width="1.4" height="1.4" fill="#ffffff"/><rect x="1330.55" y="779.90" width="1.4" height="1.4" fill="#ffffff"/><rect x="1334.05" y="772.70" width="1.4" height="1.4" fill="#ffffff"/><rect x="1334.05" y="776.20" width="1.4" height="1.4" fill="#ffffff"/><rect x="1334.05" y="779.90" width="1.4" height="1.4" fill="#ffffff"/><rect x="1337.75" y="772.70" width="1.4" height="1.4" fill="#ffffff"/><rect x="1337.75" y="776.20" width="1.4" height="1.4" fill="#ffffff"/><rect x="1337.75" y="779.90" width="1.4" height="1.4" fill="#ffffff"/></g>
<g fill="#dedede"><path d="M15.9 1051.1H32V1071.4H24V1060H15.9Z"/><circle cx="38.5" cy="1055.2" r="3.7"/><path d="M44.9 1051.1H56L48.6 1071.4H37.6Z"/></g>
<text x="65" y="1071.4" font-size="29.5" font-weight="bold" fill="#dedede" stroke="#dedede" stroke-width="0.5" textLength="163.5" lengthAdjust="spacingAndGlyphs">TradingView</text>
</svg>
</body></html>
